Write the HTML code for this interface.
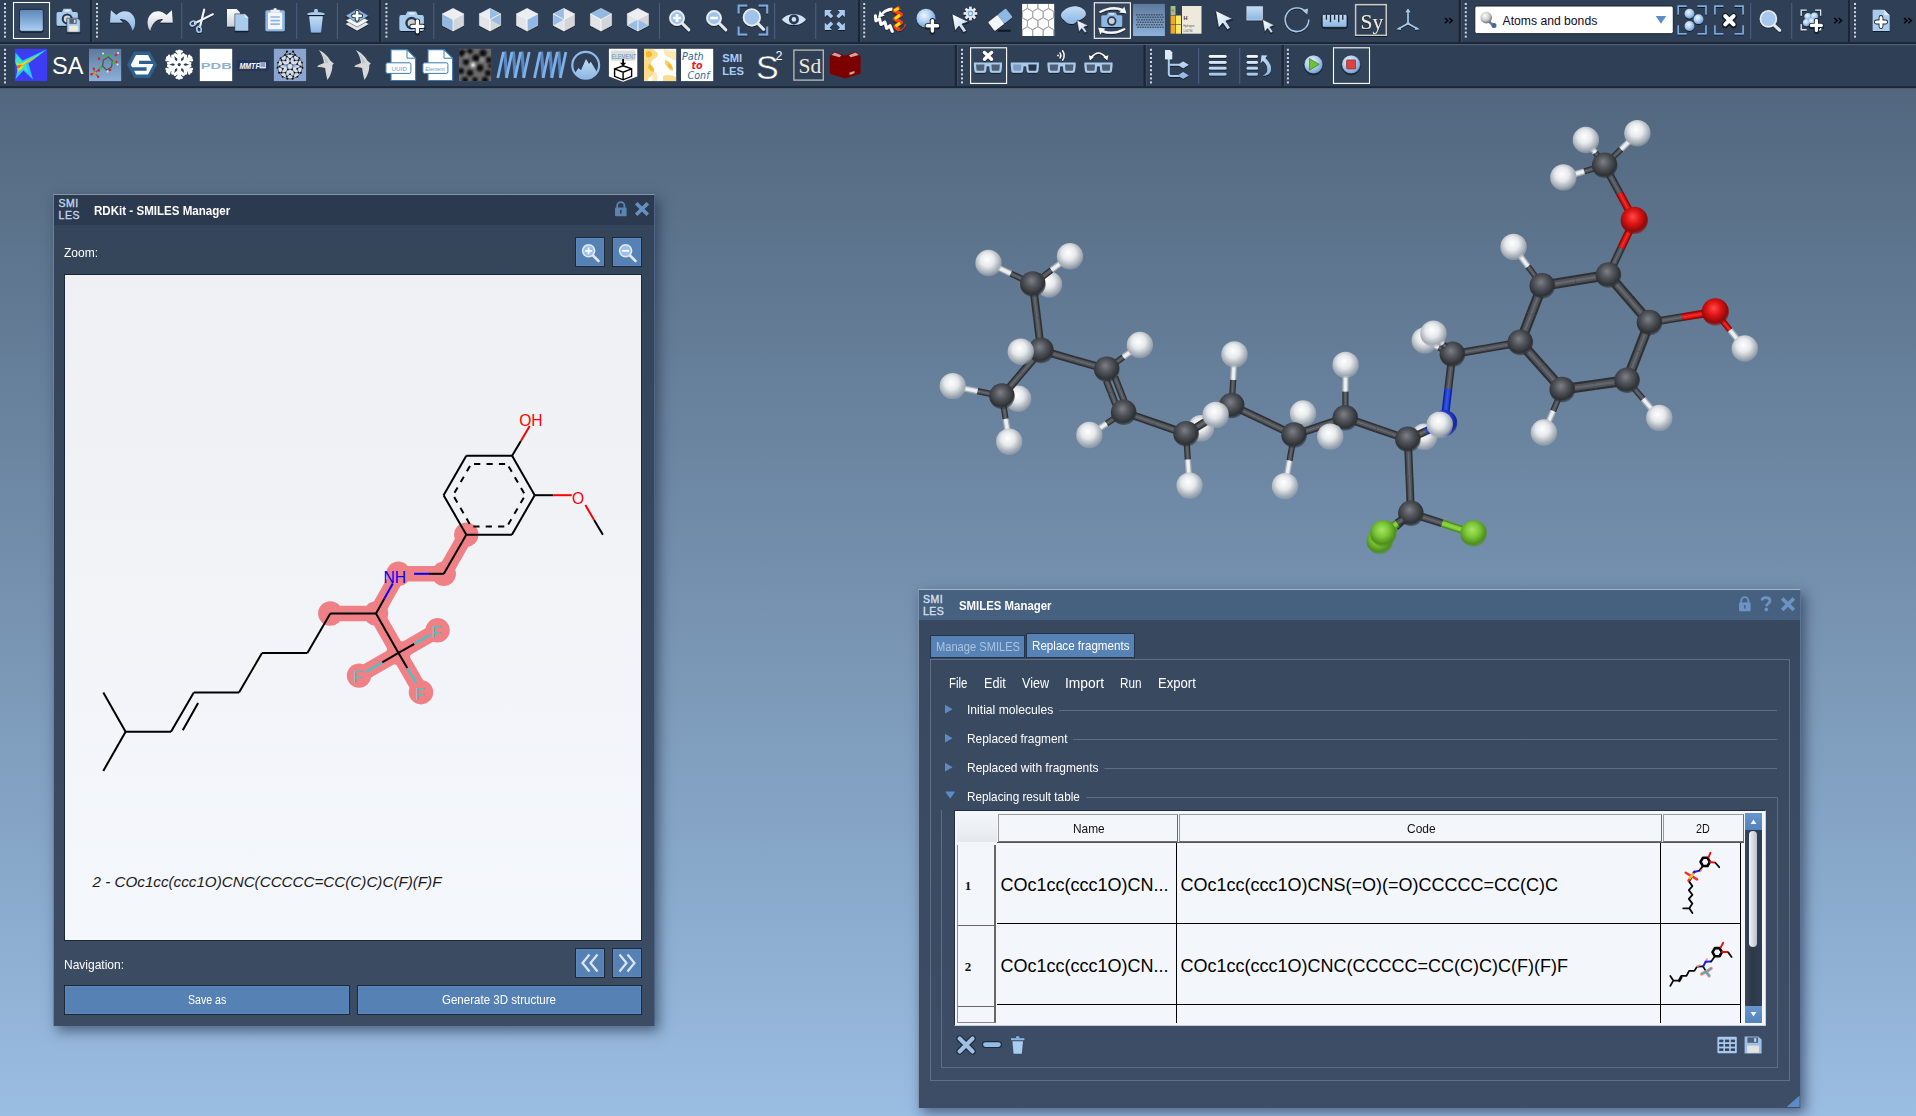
<!DOCTYPE html>
<html><head><meta charset="utf-8"><title>SMILES Manager</title>
<style>
*{box-sizing:border-box}
html,body{margin:0;padding:0}
body{width:1916px;height:1116px;overflow:hidden;position:relative;font-family:"Liberation Sans","DejaVu Sans",sans-serif;font-size:13px;color:#fff;
background:linear-gradient(#52677e 0px,#52677e 86px,#9abde2 1116px)}
.abs{position:absolute}
.ui{display:inline-block;transform:scaleX(.89);transform-origin:0 50%;white-space:nowrap}
.uic{display:inline-block;transform:scaleX(.89);transform-origin:50% 50%;white-space:nowrap}
/* toolbar */
#tb{position:absolute;left:0;top:0;width:1916px;height:88px;background:#2f3f55}
#tb .hl{position:absolute;left:0;width:1916px;height:2px;background:#1f2b3b}
.grip{position:absolute;width:3px;background-image:repeating-linear-gradient(#c9d3df 0 2px,transparent 2px 4px);}
.vsep{position:absolute;width:2px;background:#1f2b3b}
.tsep{position:absolute;width:1px;background:#4a5b78}
.ic{position:absolute;width:32px;height:32px}
/* windows */
.win{position:absolute;box-shadow:4px 5px 12px 0 rgba(28,42,66,.6);}
.win .title{position:absolute;left:0;top:0;right:0;height:30px}
.btn{position:absolute;background:#5581b4;border:1px solid #1d2838;box-shadow:inset 0 0 0 1px rgba(120,160,210,.25)}
</style></head><body>
<style>
.hd{background:#f3f6fb;border:1px solid #9a9a9a;border-right:1.5px solid #6e6e6e;border-bottom:1.5px solid #6e6e6e}
.rh{background:#f3f6fb;border-left:1px solid #8f8f8f;border-right:2px solid #666;border-bottom:1.5px solid #666}
</style>
<svg class="abs" style="left:0;top:0" width="1916" height="1116" viewBox="0 0 1916 1116"><defs>
<radialGradient id="gC" cx="46%" cy="40%" r="58%" fx="44%" fy="36%"><stop offset="0" stop-color="#7d8186"/><stop offset=".45" stop-color="#50545a"/><stop offset=".86" stop-color="#2e3134"/><stop offset="1" stop-color="#2e3134" stop-opacity=".55"/></radialGradient>
<radialGradient id="gH" cx="46%" cy="40%" r="58%" fx="44%" fy="36%"><stop offset="0" stop-color="#ffffff"/><stop offset=".45" stop-color="#e6e9ec"/><stop offset=".86" stop-color="#a2aab3"/><stop offset="1" stop-color="#a2aab3" stop-opacity=".55"/></radialGradient>
<radialGradient id="gO" cx="46%" cy="40%" r="58%" fx="44%" fy="36%"><stop offset="0" stop-color="#ff4a4a"/><stop offset=".45" stop-color="#df1414"/><stop offset=".86" stop-color="#8e0a0a"/><stop offset="1" stop-color="#8e0a0a" stop-opacity=".55"/></radialGradient>
<radialGradient id="gN" cx="46%" cy="40%" r="58%" fx="44%" fy="36%"><stop offset="0" stop-color="#4a6cf5"/><stop offset=".45" stop-color="#2443dc"/><stop offset=".86" stop-color="#13259a"/><stop offset="1" stop-color="#13259a" stop-opacity=".55"/></radialGradient>
<radialGradient id="gF" cx="46%" cy="40%" r="58%" fx="44%" fy="36%"><stop offset="0" stop-color="#a6e567"/><stop offset=".45" stop-color="#7cc837"/><stop offset=".86" stop-color="#4f8f1d"/><stop offset="1" stop-color="#4f8f1d" stop-opacity=".55"/></radialGradient>
</defs>
<circle cx="1379.8" cy="540.9" r="13.2" fill="url(#gF)"/>
<circle cx="1049.0" cy="284.5" r="13.2" fill="url(#gH)"/>
<circle cx="1018.1" cy="398.7" r="13.2" fill="url(#gH)"/>
<circle cx="1200.9" cy="428.3" r="13.2" fill="url(#gH)"/>
<circle cx="1303.0" cy="413.5" r="13.2" fill="url(#gH)"/>
<circle cx="1424.2" cy="436.8" r="13.2" fill="url(#gH)"/>
<circle cx="1424.8" cy="340.4" r="13.2" fill="url(#gH)"/>
<g stroke-linecap="butt"><line x1="1298.0" y1="425.5" x2="1298.5" y2="424.2" stroke="#2e3134" stroke-width="6.2"/><line x1="1298.0" y1="425.5" x2="1298.5" y2="424.2" stroke="#50545a" stroke-width="3.7"/><line x1="1298.0" y1="425.5" x2="1298.5" y2="424.2" stroke="#7d8186" stroke-width="1.2" opacity=".45"/></g><g stroke-linecap="butt"><line x1="1298.5" y1="424.2" x2="1299.0" y2="423.3" stroke="#a2aab3" stroke-width="6.2"/><line x1="1298.5" y1="424.2" x2="1299.0" y2="423.3" stroke="#e6e9ec" stroke-width="3.7"/><line x1="1298.5" y1="424.2" x2="1299.0" y2="423.3" stroke="#ffffff" stroke-width="1.2" opacity=".45"/></g>
<g stroke-linecap="butt"><line x1="1443.3" y1="349.7" x2="1438.6" y2="347.4" stroke="#2e3134" stroke-width="6.2"/><line x1="1443.3" y1="349.7" x2="1438.6" y2="347.4" stroke="#50545a" stroke-width="3.7"/><line x1="1443.3" y1="349.7" x2="1438.6" y2="347.4" stroke="#7d8186" stroke-width="1.2" opacity=".45"/></g><g stroke-linecap="butt"><line x1="1438.6" y1="347.4" x2="1434.2" y2="345.1" stroke="#a2aab3" stroke-width="6.2"/><line x1="1438.6" y1="347.4" x2="1434.2" y2="345.1" stroke="#e6e9ec" stroke-width="3.7"/><line x1="1438.6" y1="347.4" x2="1434.2" y2="345.1" stroke="#ffffff" stroke-width="1.2" opacity=".45"/></g>
<g stroke-linecap="butt"><line x1="1403.2" y1="520.1" x2="1395.3" y2="527.1" stroke="#2e3134" stroke-width="8"/><line x1="1403.2" y1="520.1" x2="1395.3" y2="527.1" stroke="#50545a" stroke-width="4.8"/><line x1="1403.2" y1="520.1" x2="1395.3" y2="527.1" stroke="#7d8186" stroke-width="1.6" opacity=".45"/></g><g stroke-linecap="butt"><line x1="1395.3" y1="527.1" x2="1387.7" y2="533.9" stroke="#4f8f1d" stroke-width="8"/><line x1="1395.3" y1="527.1" x2="1387.7" y2="533.9" stroke="#7cc837" stroke-width="4.8"/><line x1="1395.3" y1="527.1" x2="1387.7" y2="533.9" stroke="#a6e567" stroke-width="1.6" opacity=".45"/></g>
<g stroke-linecap="butt"><line x1="1023.6" y1="279.6" x2="1010.7" y2="273.5" stroke="#2e3134" stroke-width="6.2"/><line x1="1023.6" y1="279.6" x2="1010.7" y2="273.5" stroke="#50545a" stroke-width="3.7"/><line x1="1023.6" y1="279.6" x2="1010.7" y2="273.5" stroke="#7d8186" stroke-width="1.2" opacity=".45"/></g><g stroke-linecap="butt"><line x1="1010.7" y1="273.5" x2="998.0" y2="267.5" stroke="#a2aab3" stroke-width="6.2"/><line x1="1010.7" y1="273.5" x2="998.0" y2="267.5" stroke="#e6e9ec" stroke-width="3.7"/><line x1="1010.7" y1="273.5" x2="998.0" y2="267.5" stroke="#ffffff" stroke-width="1.2" opacity=".45"/></g>
<g stroke-linecap="butt"><line x1="1041.1" y1="277.9" x2="1051.5" y2="270.1" stroke="#2e3134" stroke-width="6.2"/><line x1="1041.1" y1="277.9" x2="1051.5" y2="270.1" stroke="#50545a" stroke-width="3.7"/><line x1="1041.1" y1="277.9" x2="1051.5" y2="270.1" stroke="#7d8186" stroke-width="1.2" opacity=".45"/></g><g stroke-linecap="butt"><line x1="1051.5" y1="270.1" x2="1061.5" y2="262.6" stroke="#a2aab3" stroke-width="6.2"/><line x1="1051.5" y1="270.1" x2="1061.5" y2="262.6" stroke="#e6e9ec" stroke-width="3.7"/><line x1="1051.5" y1="270.1" x2="1061.5" y2="262.6" stroke="#ffffff" stroke-width="1.2" opacity=".45"/></g>
<g stroke-linecap="butt"><line x1="992.0" y1="394.1" x2="977.4" y2="391.1" stroke="#2e3134" stroke-width="6.2"/><line x1="992.0" y1="394.1" x2="977.4" y2="391.1" stroke="#50545a" stroke-width="3.7"/><line x1="992.0" y1="394.1" x2="977.4" y2="391.1" stroke="#7d8186" stroke-width="1.2" opacity=".45"/></g><g stroke-linecap="butt"><line x1="977.4" y1="391.1" x2="963.1" y2="388.2" stroke="#a2aab3" stroke-width="6.2"/><line x1="977.4" y1="391.1" x2="963.1" y2="388.2" stroke="#e6e9ec" stroke-width="3.7"/><line x1="977.4" y1="391.1" x2="963.1" y2="388.2" stroke="#ffffff" stroke-width="1.2" opacity=".45"/></g>
<g stroke-linecap="butt"><line x1="1003.6" y1="406.2" x2="1005.6" y2="418.9" stroke="#2e3134" stroke-width="6.2"/><line x1="1003.6" y1="406.2" x2="1005.6" y2="418.9" stroke="#50545a" stroke-width="3.7"/><line x1="1003.6" y1="406.2" x2="1005.6" y2="418.9" stroke="#7d8186" stroke-width="1.2" opacity=".45"/></g><g stroke-linecap="butt"><line x1="1005.6" y1="418.9" x2="1007.6" y2="431.3" stroke="#a2aab3" stroke-width="6.2"/><line x1="1005.6" y1="418.9" x2="1007.6" y2="431.3" stroke="#e6e9ec" stroke-width="3.7"/><line x1="1005.6" y1="418.9" x2="1007.6" y2="431.3" stroke="#ffffff" stroke-width="1.2" opacity=".45"/></g>
<g stroke-linecap="butt"><line x1="1115.1" y1="363.2" x2="1123.3" y2="357.1" stroke="#2e3134" stroke-width="6.2"/><line x1="1115.1" y1="363.2" x2="1123.3" y2="357.1" stroke="#50545a" stroke-width="3.7"/><line x1="1115.1" y1="363.2" x2="1123.3" y2="357.1" stroke="#7d8186" stroke-width="1.2" opacity=".45"/></g><g stroke-linecap="butt"><line x1="1123.3" y1="357.1" x2="1131.4" y2="351.2" stroke="#a2aab3" stroke-width="6.2"/><line x1="1123.3" y1="357.1" x2="1131.4" y2="351.2" stroke="#e6e9ec" stroke-width="3.7"/><line x1="1123.3" y1="357.1" x2="1131.4" y2="351.2" stroke="#ffffff" stroke-width="1.2" opacity=".45"/></g>
<g stroke-linecap="butt"><line x1="1115.2" y1="417.9" x2="1106.5" y2="423.6" stroke="#2e3134" stroke-width="6.2"/><line x1="1115.2" y1="417.9" x2="1106.5" y2="423.6" stroke="#50545a" stroke-width="3.7"/><line x1="1115.2" y1="417.9" x2="1106.5" y2="423.6" stroke="#7d8186" stroke-width="1.2" opacity=".45"/></g><g stroke-linecap="butt"><line x1="1106.5" y1="423.6" x2="1098.1" y2="429.2" stroke="#a2aab3" stroke-width="6.2"/><line x1="1106.5" y1="423.6" x2="1098.1" y2="429.2" stroke="#e6e9ec" stroke-width="3.7"/><line x1="1106.5" y1="423.6" x2="1098.1" y2="429.2" stroke="#ffffff" stroke-width="1.2" opacity=".45"/></g>
<g stroke-linecap="butt"><line x1="1186.8" y1="443.9" x2="1187.8" y2="459.6" stroke="#2e3134" stroke-width="6.2"/><line x1="1186.8" y1="443.9" x2="1187.8" y2="459.6" stroke="#50545a" stroke-width="3.7"/><line x1="1186.8" y1="443.9" x2="1187.8" y2="459.6" stroke="#7d8186" stroke-width="1.2" opacity=".45"/></g><g stroke-linecap="butt"><line x1="1187.8" y1="459.6" x2="1188.9" y2="475.1" stroke="#a2aab3" stroke-width="6.2"/><line x1="1187.8" y1="459.6" x2="1188.9" y2="475.1" stroke="#e6e9ec" stroke-width="3.7"/><line x1="1187.8" y1="459.6" x2="1188.9" y2="475.1" stroke="#ffffff" stroke-width="1.2" opacity=".45"/></g>
<g stroke-linecap="butt"><line x1="1232.3" y1="395.3" x2="1233.2" y2="379.9" stroke="#2e3134" stroke-width="6.2"/><line x1="1232.3" y1="395.3" x2="1233.2" y2="379.9" stroke="#50545a" stroke-width="3.7"/><line x1="1232.3" y1="395.3" x2="1233.2" y2="379.9" stroke="#7d8186" stroke-width="1.2" opacity=".45"/></g><g stroke-linecap="butt"><line x1="1233.2" y1="379.9" x2="1233.9" y2="364.9" stroke="#a2aab3" stroke-width="6.2"/><line x1="1233.2" y1="379.9" x2="1233.9" y2="364.9" stroke="#e6e9ec" stroke-width="3.7"/><line x1="1233.2" y1="379.9" x2="1233.9" y2="364.9" stroke="#ffffff" stroke-width="1.2" opacity=".45"/></g>
<g stroke-linecap="butt"><line x1="1292.3" y1="445.1" x2="1289.5" y2="460.6" stroke="#2e3134" stroke-width="6.2"/><line x1="1292.3" y1="445.1" x2="1289.5" y2="460.6" stroke="#50545a" stroke-width="3.7"/><line x1="1292.3" y1="445.1" x2="1289.5" y2="460.6" stroke="#7d8186" stroke-width="1.2" opacity=".45"/></g><g stroke-linecap="butt"><line x1="1289.5" y1="460.6" x2="1286.9" y2="475.7" stroke="#a2aab3" stroke-width="6.2"/><line x1="1289.5" y1="460.6" x2="1286.9" y2="475.7" stroke="#e6e9ec" stroke-width="3.7"/><line x1="1289.5" y1="460.6" x2="1286.9" y2="475.7" stroke="#ffffff" stroke-width="1.2" opacity=".45"/></g>
<g stroke-linecap="butt"><line x1="1345.4" y1="407.6" x2="1345.4" y2="391.4" stroke="#2e3134" stroke-width="6.2"/><line x1="1345.4" y1="407.6" x2="1345.4" y2="391.4" stroke="#50545a" stroke-width="3.7"/><line x1="1345.4" y1="407.6" x2="1345.4" y2="391.4" stroke="#7d8186" stroke-width="1.2" opacity=".45"/></g><g stroke-linecap="butt"><line x1="1345.4" y1="391.4" x2="1345.5" y2="375.5" stroke="#a2aab3" stroke-width="6.2"/><line x1="1345.4" y1="391.4" x2="1345.5" y2="375.5" stroke="#e6e9ec" stroke-width="3.7"/><line x1="1345.4" y1="391.4" x2="1345.5" y2="375.5" stroke="#ffffff" stroke-width="1.2" opacity=".45"/></g>
<g stroke-linecap="butt"><line x1="1536.2" y1="277.5" x2="1527.9" y2="266.3" stroke="#2e3134" stroke-width="6.2"/><line x1="1536.2" y1="277.5" x2="1527.9" y2="266.3" stroke="#50545a" stroke-width="3.7"/><line x1="1536.2" y1="277.5" x2="1527.9" y2="266.3" stroke="#7d8186" stroke-width="1.2" opacity=".45"/></g><g stroke-linecap="butt"><line x1="1527.9" y1="266.3" x2="1519.9" y2="255.4" stroke="#a2aab3" stroke-width="6.2"/><line x1="1527.9" y1="266.3" x2="1519.9" y2="255.4" stroke="#e6e9ec" stroke-width="3.7"/><line x1="1527.9" y1="266.3" x2="1519.9" y2="255.4" stroke="#ffffff" stroke-width="1.2" opacity=".45"/></g>
<g stroke-linecap="butt"><line x1="1633.8" y1="388.0" x2="1643.2" y2="399.0" stroke="#2e3134" stroke-width="6.2"/><line x1="1633.8" y1="388.0" x2="1643.2" y2="399.0" stroke="#50545a" stroke-width="3.7"/><line x1="1633.8" y1="388.0" x2="1643.2" y2="399.0" stroke="#7d8186" stroke-width="1.2" opacity=".45"/></g><g stroke-linecap="butt"><line x1="1643.2" y1="399.0" x2="1652.4" y2="409.9" stroke="#a2aab3" stroke-width="6.2"/><line x1="1643.2" y1="399.0" x2="1652.4" y2="409.9" stroke="#e6e9ec" stroke-width="3.7"/><line x1="1643.2" y1="399.0" x2="1652.4" y2="409.9" stroke="#ffffff" stroke-width="1.2" opacity=".45"/></g>
<g stroke-linecap="butt"><line x1="1558.3" y1="398.9" x2="1553.1" y2="411.0" stroke="#2e3134" stroke-width="6.2"/><line x1="1558.3" y1="398.9" x2="1553.1" y2="411.0" stroke="#50545a" stroke-width="3.7"/><line x1="1558.3" y1="398.9" x2="1553.1" y2="411.0" stroke="#7d8186" stroke-width="1.2" opacity=".45"/></g><g stroke-linecap="butt"><line x1="1553.1" y1="411.0" x2="1548.1" y2="422.8" stroke="#a2aab3" stroke-width="6.2"/><line x1="1553.1" y1="411.0" x2="1548.1" y2="422.8" stroke="#e6e9ec" stroke-width="3.7"/><line x1="1553.1" y1="411.0" x2="1548.1" y2="422.8" stroke="#ffffff" stroke-width="1.2" opacity=".45"/></g>
<g stroke-linecap="butt"><line x1="1722.1" y1="320.3" x2="1730.0" y2="330.1" stroke="#8e0a0a" stroke-width="6.2"/><line x1="1722.1" y1="320.3" x2="1730.0" y2="330.1" stroke="#df1414" stroke-width="3.7"/><line x1="1722.1" y1="320.3" x2="1730.0" y2="330.1" stroke="#ff4a4a" stroke-width="1.2" opacity=".45"/></g><g stroke-linecap="butt"><line x1="1730.0" y1="330.1" x2="1738.2" y2="340.3" stroke="#a2aab3" stroke-width="6.2"/><line x1="1730.0" y1="330.1" x2="1738.2" y2="340.3" stroke="#e6e9ec" stroke-width="3.7"/><line x1="1730.0" y1="330.1" x2="1738.2" y2="340.3" stroke="#ffffff" stroke-width="1.2" opacity=".45"/></g>
<g stroke-linecap="butt"><line x1="1598.6" y1="157.1" x2="1595.3" y2="152.7" stroke="#2e3134" stroke-width="6.2"/><line x1="1598.6" y1="157.1" x2="1595.3" y2="152.7" stroke="#50545a" stroke-width="3.7"/><line x1="1598.6" y1="157.1" x2="1595.3" y2="152.7" stroke="#7d8186" stroke-width="1.2" opacity=".45"/></g><g stroke-linecap="butt"><line x1="1595.3" y1="152.7" x2="1592.2" y2="148.5" stroke="#a2aab3" stroke-width="6.2"/><line x1="1595.3" y1="152.7" x2="1592.2" y2="148.5" stroke="#e6e9ec" stroke-width="3.7"/><line x1="1595.3" y1="152.7" x2="1592.2" y2="148.5" stroke="#ffffff" stroke-width="1.2" opacity=".45"/></g>
<g stroke-linecap="butt"><line x1="1612.0" y1="158.1" x2="1621.1" y2="149.2" stroke="#2e3134" stroke-width="6.2"/><line x1="1612.0" y1="158.1" x2="1621.1" y2="149.2" stroke="#50545a" stroke-width="3.7"/><line x1="1612.0" y1="158.1" x2="1621.1" y2="149.2" stroke="#7d8186" stroke-width="1.2" opacity=".45"/></g><g stroke-linecap="butt"><line x1="1621.1" y1="149.2" x2="1629.9" y2="140.6" stroke="#a2aab3" stroke-width="6.2"/><line x1="1621.1" y1="149.2" x2="1629.9" y2="140.6" stroke="#e6e9ec" stroke-width="3.7"/><line x1="1621.1" y1="149.2" x2="1629.9" y2="140.6" stroke="#ffffff" stroke-width="1.2" opacity=".45"/></g>
<g stroke-linecap="butt"><line x1="1594.9" y1="168.2" x2="1584.1" y2="171.4" stroke="#2e3134" stroke-width="6.2"/><line x1="1594.9" y1="168.2" x2="1584.1" y2="171.4" stroke="#50545a" stroke-width="3.7"/><line x1="1594.9" y1="168.2" x2="1584.1" y2="171.4" stroke="#7d8186" stroke-width="1.2" opacity=".45"/></g><g stroke-linecap="butt"><line x1="1584.1" y1="171.4" x2="1573.5" y2="174.4" stroke="#a2aab3" stroke-width="6.2"/><line x1="1584.1" y1="171.4" x2="1573.5" y2="174.4" stroke="#e6e9ec" stroke-width="3.7"/><line x1="1584.1" y1="171.4" x2="1573.5" y2="174.4" stroke="#ffffff" stroke-width="1.2" opacity=".45"/></g>
<g stroke-linecap="butt"><line x1="1034.1" y1="294.2" x2="1037.0" y2="317.2" stroke="#2e3134" stroke-width="8"/><line x1="1034.1" y1="294.2" x2="1037.0" y2="317.2" stroke="#50545a" stroke-width="4.8"/><line x1="1034.1" y1="294.2" x2="1037.0" y2="317.2" stroke="#7d8186" stroke-width="1.6" opacity=".45"/></g><g stroke-linecap="butt"><line x1="1037.0" y1="317.2" x2="1039.8" y2="340.2" stroke="#2e3134" stroke-width="8"/><line x1="1037.0" y1="317.2" x2="1039.8" y2="340.2" stroke="#50545a" stroke-width="4.8"/><line x1="1037.0" y1="317.2" x2="1039.8" y2="340.2" stroke="#7d8186" stroke-width="1.6" opacity=".45"/></g>
<g stroke-linecap="butt"><line x1="1034.4" y1="358.2" x2="1021.5" y2="373.2" stroke="#2e3134" stroke-width="8"/><line x1="1034.4" y1="358.2" x2="1021.5" y2="373.2" stroke="#50545a" stroke-width="4.8"/><line x1="1034.4" y1="358.2" x2="1021.5" y2="373.2" stroke="#7d8186" stroke-width="1.6" opacity=".45"/></g><g stroke-linecap="butt"><line x1="1021.5" y1="373.2" x2="1008.6" y2="388.3" stroke="#2e3134" stroke-width="8"/><line x1="1021.5" y1="373.2" x2="1008.6" y2="388.3" stroke="#50545a" stroke-width="4.8"/><line x1="1021.5" y1="373.2" x2="1008.6" y2="388.3" stroke="#7d8186" stroke-width="1.6" opacity=".45"/></g>
<g stroke-linecap="butt"><line x1="1050.8" y1="353.2" x2="1073.9" y2="359.8" stroke="#2e3134" stroke-width="8"/><line x1="1050.8" y1="353.2" x2="1073.9" y2="359.8" stroke="#50545a" stroke-width="4.8"/><line x1="1050.8" y1="353.2" x2="1073.9" y2="359.8" stroke="#7d8186" stroke-width="1.6" opacity=".45"/></g><g stroke-linecap="butt"><line x1="1073.9" y1="359.8" x2="1097.0" y2="366.4" stroke="#2e3134" stroke-width="8"/><line x1="1073.9" y1="359.8" x2="1097.0" y2="366.4" stroke="#50545a" stroke-width="4.8"/><line x1="1073.9" y1="359.8" x2="1097.0" y2="366.4" stroke="#7d8186" stroke-width="1.6" opacity=".45"/></g>
<g stroke-linecap="butt"><line x1="1133.4" y1="415.5" x2="1154.9" y2="422.9" stroke="#2e3134" stroke-width="8"/><line x1="1133.4" y1="415.5" x2="1154.9" y2="422.9" stroke="#50545a" stroke-width="4.8"/><line x1="1133.4" y1="415.5" x2="1154.9" y2="422.9" stroke="#7d8186" stroke-width="1.6" opacity=".45"/></g><g stroke-linecap="butt"><line x1="1154.9" y1="422.9" x2="1176.4" y2="430.4" stroke="#2e3134" stroke-width="8"/><line x1="1154.9" y1="422.9" x2="1176.4" y2="430.4" stroke="#50545a" stroke-width="4.8"/><line x1="1154.9" y1="422.9" x2="1176.4" y2="430.4" stroke="#7d8186" stroke-width="1.6" opacity=".45"/></g>
<g stroke-linecap="butt"><line x1="1194.8" y1="428.3" x2="1208.9" y2="419.6" stroke="#2e3134" stroke-width="8"/><line x1="1194.8" y1="428.3" x2="1208.9" y2="419.6" stroke="#50545a" stroke-width="4.8"/><line x1="1194.8" y1="428.3" x2="1208.9" y2="419.6" stroke="#7d8186" stroke-width="1.6" opacity=".45"/></g><g stroke-linecap="butt"><line x1="1208.9" y1="419.6" x2="1223.1" y2="410.9" stroke="#2e3134" stroke-width="8"/><line x1="1208.9" y1="419.6" x2="1223.1" y2="410.9" stroke="#50545a" stroke-width="4.8"/><line x1="1208.9" y1="419.6" x2="1223.1" y2="410.9" stroke="#7d8186" stroke-width="1.6" opacity=".45"/></g>
<g stroke-linecap="butt"><line x1="1241.1" y1="409.9" x2="1262.9" y2="420.2" stroke="#2e3134" stroke-width="8"/><line x1="1241.1" y1="409.9" x2="1262.9" y2="420.2" stroke="#50545a" stroke-width="4.8"/><line x1="1241.1" y1="409.9" x2="1262.9" y2="420.2" stroke="#7d8186" stroke-width="1.6" opacity=".45"/></g><g stroke-linecap="butt"><line x1="1262.9" y1="420.2" x2="1284.8" y2="430.6" stroke="#2e3134" stroke-width="8"/><line x1="1262.9" y1="420.2" x2="1284.8" y2="430.6" stroke="#50545a" stroke-width="4.8"/><line x1="1262.9" y1="420.2" x2="1284.8" y2="430.6" stroke="#7d8186" stroke-width="1.6" opacity=".45"/></g>
<g stroke-linecap="butt"><line x1="1303.8" y1="431.7" x2="1319.7" y2="426.4" stroke="#2e3134" stroke-width="8"/><line x1="1303.8" y1="431.7" x2="1319.7" y2="426.4" stroke="#50545a" stroke-width="4.8"/><line x1="1303.8" y1="431.7" x2="1319.7" y2="426.4" stroke="#7d8186" stroke-width="1.6" opacity=".45"/></g><g stroke-linecap="butt"><line x1="1319.7" y1="426.4" x2="1335.6" y2="421.1" stroke="#2e3134" stroke-width="8"/><line x1="1319.7" y1="426.4" x2="1335.6" y2="421.1" stroke="#50545a" stroke-width="4.8"/><line x1="1319.7" y1="426.4" x2="1335.6" y2="421.1" stroke="#7d8186" stroke-width="1.6" opacity=".45"/></g>
<g stroke-linecap="butt"><line x1="1355.0" y1="421.1" x2="1376.6" y2="428.6" stroke="#2e3134" stroke-width="8"/><line x1="1355.0" y1="421.1" x2="1376.6" y2="428.6" stroke="#50545a" stroke-width="4.8"/><line x1="1355.0" y1="421.1" x2="1376.6" y2="428.6" stroke="#7d8186" stroke-width="1.6" opacity=".45"/></g><g stroke-linecap="butt"><line x1="1376.6" y1="428.6" x2="1398.2" y2="436.0" stroke="#2e3134" stroke-width="8"/><line x1="1376.6" y1="428.6" x2="1398.2" y2="436.0" stroke="#50545a" stroke-width="4.8"/><line x1="1376.6" y1="428.6" x2="1398.2" y2="436.0" stroke="#7d8186" stroke-width="1.6" opacity=".45"/></g>
<g stroke-linecap="butt"><line x1="1417.2" y1="435.1" x2="1426.1" y2="431.1" stroke="#2e3134" stroke-width="8"/><line x1="1417.2" y1="435.1" x2="1426.1" y2="431.1" stroke="#50545a" stroke-width="4.8"/><line x1="1417.2" y1="435.1" x2="1426.1" y2="431.1" stroke="#7d8186" stroke-width="1.6" opacity=".45"/></g><g stroke-linecap="butt"><line x1="1426.1" y1="431.1" x2="1434.8" y2="427.3" stroke="#13259a" stroke-width="8"/><line x1="1426.1" y1="431.1" x2="1434.8" y2="427.3" stroke="#2443dc" stroke-width="4.8"/><line x1="1426.1" y1="431.1" x2="1434.8" y2="427.3" stroke="#4a6cf5" stroke-width="1.6" opacity=".45"/></g>
<g stroke-linecap="butt"><line x1="1445.5" y1="412.7" x2="1448.3" y2="388.6" stroke="#13259a" stroke-width="8"/><line x1="1445.5" y1="412.7" x2="1448.3" y2="388.6" stroke="#2443dc" stroke-width="4.8"/><line x1="1445.5" y1="412.7" x2="1448.3" y2="388.6" stroke="#4a6cf5" stroke-width="1.6" opacity=".45"/></g><g stroke-linecap="butt"><line x1="1448.3" y1="388.6" x2="1451.2" y2="364.5" stroke="#2e3134" stroke-width="8"/><line x1="1448.3" y1="388.6" x2="1451.2" y2="364.5" stroke="#50545a" stroke-width="4.8"/><line x1="1448.3" y1="388.6" x2="1451.2" y2="364.5" stroke="#7d8186" stroke-width="1.6" opacity=".45"/></g>
<g stroke-linecap="butt"><line x1="1462.5" y1="352.5" x2="1486.3" y2="348.4" stroke="#2e3134" stroke-width="8"/><line x1="1462.5" y1="352.5" x2="1486.3" y2="348.4" stroke="#50545a" stroke-width="4.8"/><line x1="1462.5" y1="352.5" x2="1486.3" y2="348.4" stroke="#7d8186" stroke-width="1.6" opacity=".45"/></g><g stroke-linecap="butt"><line x1="1486.3" y1="348.4" x2="1510.2" y2="344.2" stroke="#2e3134" stroke-width="8"/><line x1="1486.3" y1="348.4" x2="1510.2" y2="344.2" stroke="#50545a" stroke-width="4.8"/><line x1="1486.3" y1="348.4" x2="1510.2" y2="344.2" stroke="#7d8186" stroke-width="1.6" opacity=".45"/></g>
<g stroke-linecap="butt"><line x1="1612.8" y1="265.7" x2="1621.3" y2="247.7" stroke="#2e3134" stroke-width="8"/><line x1="1612.8" y1="265.7" x2="1621.3" y2="247.7" stroke="#50545a" stroke-width="4.8"/><line x1="1612.8" y1="265.7" x2="1621.3" y2="247.7" stroke="#7d8186" stroke-width="1.6" opacity=".45"/></g><g stroke-linecap="butt"><line x1="1621.3" y1="247.7" x2="1629.6" y2="230.2" stroke="#8e0a0a" stroke-width="8"/><line x1="1621.3" y1="247.7" x2="1629.6" y2="230.2" stroke="#df1414" stroke-width="4.8"/><line x1="1621.3" y1="247.7" x2="1629.6" y2="230.2" stroke="#ff4a4a" stroke-width="1.6" opacity=".45"/></g>
<g stroke-linecap="butt"><line x1="1629.2" y1="210.8" x2="1619.5" y2="192.9" stroke="#8e0a0a" stroke-width="8"/><line x1="1629.2" y1="210.8" x2="1619.5" y2="192.9" stroke="#df1414" stroke-width="4.8"/><line x1="1629.2" y1="210.8" x2="1619.5" y2="192.9" stroke="#ff4a4a" stroke-width="1.6" opacity=".45"/></g><g stroke-linecap="butt"><line x1="1619.5" y1="192.9" x2="1609.5" y2="174.3" stroke="#2e3134" stroke-width="8"/><line x1="1619.5" y1="192.9" x2="1609.5" y2="174.3" stroke="#50545a" stroke-width="4.8"/><line x1="1619.5" y1="192.9" x2="1609.5" y2="174.3" stroke="#7d8186" stroke-width="1.6" opacity=".45"/></g>
<g stroke-linecap="butt"><line x1="1659.6" y1="320.9" x2="1682.4" y2="317.1" stroke="#2e3134" stroke-width="8"/><line x1="1659.6" y1="320.9" x2="1682.4" y2="317.1" stroke="#50545a" stroke-width="4.8"/><line x1="1659.6" y1="320.9" x2="1682.4" y2="317.1" stroke="#7d8186" stroke-width="1.6" opacity=".45"/></g><g stroke-linecap="butt"><line x1="1682.4" y1="317.1" x2="1704.6" y2="313.5" stroke="#8e0a0a" stroke-width="8"/><line x1="1682.4" y1="317.1" x2="1704.6" y2="313.5" stroke="#df1414" stroke-width="4.8"/><line x1="1682.4" y1="317.1" x2="1704.6" y2="313.5" stroke="#ff4a4a" stroke-width="1.6" opacity=".45"/></g>
<g stroke-linecap="butt"><line x1="1408.3" y1="449.5" x2="1409.4" y2="476.3" stroke="#2e3134" stroke-width="8"/><line x1="1408.3" y1="449.5" x2="1409.4" y2="476.3" stroke="#50545a" stroke-width="4.8"/><line x1="1408.3" y1="449.5" x2="1409.4" y2="476.3" stroke="#7d8186" stroke-width="1.6" opacity=".45"/></g><g stroke-linecap="butt"><line x1="1409.4" y1="476.3" x2="1410.5" y2="503.1" stroke="#2e3134" stroke-width="8"/><line x1="1409.4" y1="476.3" x2="1410.5" y2="503.1" stroke="#50545a" stroke-width="4.8"/><line x1="1409.4" y1="476.3" x2="1410.5" y2="503.1" stroke="#7d8186" stroke-width="1.6" opacity=".45"/></g>
<g stroke-linecap="butt"><line x1="1420.7" y1="516.4" x2="1442.2" y2="523.3" stroke="#2e3134" stroke-width="8"/><line x1="1420.7" y1="516.4" x2="1442.2" y2="523.3" stroke="#50545a" stroke-width="4.8"/><line x1="1420.7" y1="516.4" x2="1442.2" y2="523.3" stroke="#7d8186" stroke-width="1.6" opacity=".45"/></g><g stroke-linecap="butt"><line x1="1442.2" y1="523.3" x2="1463.5" y2="530.2" stroke="#4f8f1d" stroke-width="8"/><line x1="1442.2" y1="523.3" x2="1463.5" y2="530.2" stroke="#7cc837" stroke-width="4.8"/><line x1="1442.2" y1="523.3" x2="1463.5" y2="530.2" stroke="#a6e567" stroke-width="1.6" opacity=".45"/></g>
<g stroke-linecap="butt"><line x1="1524.0" y1="332.9" x2="1531.3" y2="314.0" stroke="#2e3134" stroke-width="10.5"/><line x1="1524.0" y1="332.9" x2="1531.3" y2="314.0" stroke="#50545a" stroke-width="6.3"/><line x1="1524.0" y1="332.9" x2="1531.3" y2="314.0" stroke="#7d8186" stroke-width="2.1" opacity=".45"/></g><g stroke-linecap="butt"><line x1="1531.3" y1="314.0" x2="1538.6" y2="295.2" stroke="#2e3134" stroke-width="10.5"/><line x1="1531.3" y1="314.0" x2="1538.6" y2="295.2" stroke="#50545a" stroke-width="6.3"/><line x1="1531.3" y1="314.0" x2="1538.6" y2="295.2" stroke="#7d8186" stroke-width="2.1" opacity=".45"/></g>
<g stroke-linecap="butt"><line x1="1552.4" y1="284.1" x2="1575.3" y2="280.4" stroke="#2e3134" stroke-width="10.5"/><line x1="1552.4" y1="284.1" x2="1575.3" y2="280.4" stroke="#50545a" stroke-width="6.3"/><line x1="1552.4" y1="284.1" x2="1575.3" y2="280.4" stroke="#7d8186" stroke-width="2.1" opacity=".45"/></g><g stroke-linecap="butt"><line x1="1575.3" y1="280.4" x2="1598.3" y2="276.6" stroke="#2e3134" stroke-width="10.5"/><line x1="1575.3" y1="280.4" x2="1598.3" y2="276.6" stroke="#50545a" stroke-width="6.3"/><line x1="1575.3" y1="280.4" x2="1598.3" y2="276.6" stroke="#7d8186" stroke-width="2.1" opacity=".45"/></g>
<g stroke-linecap="butt"><line x1="1615.1" y1="282.7" x2="1629.0" y2="298.8" stroke="#2e3134" stroke-width="10.5"/><line x1="1615.1" y1="282.7" x2="1629.0" y2="298.8" stroke="#50545a" stroke-width="6.3"/><line x1="1615.1" y1="282.7" x2="1629.0" y2="298.8" stroke="#7d8186" stroke-width="2.1" opacity=".45"/></g><g stroke-linecap="butt"><line x1="1629.0" y1="298.8" x2="1642.8" y2="314.8" stroke="#2e3134" stroke-width="10.5"/><line x1="1629.0" y1="298.8" x2="1642.8" y2="314.8" stroke="#50545a" stroke-width="6.3"/><line x1="1629.0" y1="298.8" x2="1642.8" y2="314.8" stroke="#7d8186" stroke-width="2.1" opacity=".45"/></g>
<g stroke-linecap="butt"><line x1="1645.8" y1="332.0" x2="1638.3" y2="351.4" stroke="#2e3134" stroke-width="10.5"/><line x1="1645.8" y1="332.0" x2="1638.3" y2="351.4" stroke="#50545a" stroke-width="6.3"/><line x1="1645.8" y1="332.0" x2="1638.3" y2="351.4" stroke="#7d8186" stroke-width="2.1" opacity=".45"/></g><g stroke-linecap="butt"><line x1="1638.3" y1="351.4" x2="1630.8" y2="370.7" stroke="#2e3134" stroke-width="10.5"/><line x1="1638.3" y1="351.4" x2="1630.8" y2="370.7" stroke="#50545a" stroke-width="6.3"/><line x1="1638.3" y1="351.4" x2="1630.8" y2="370.7" stroke="#7d8186" stroke-width="2.1" opacity=".45"/></g>
<g stroke-linecap="butt"><line x1="1617.0" y1="381.7" x2="1594.7" y2="384.9" stroke="#2e3134" stroke-width="10.5"/><line x1="1617.0" y1="381.7" x2="1594.7" y2="384.9" stroke="#50545a" stroke-width="6.3"/><line x1="1617.0" y1="381.7" x2="1594.7" y2="384.9" stroke="#7d8186" stroke-width="2.1" opacity=".45"/></g><g stroke-linecap="butt"><line x1="1594.7" y1="384.9" x2="1572.4" y2="388.0" stroke="#2e3134" stroke-width="10.5"/><line x1="1594.7" y1="384.9" x2="1572.4" y2="388.0" stroke="#50545a" stroke-width="6.3"/><line x1="1594.7" y1="384.9" x2="1572.4" y2="388.0" stroke="#7d8186" stroke-width="2.1" opacity=".45"/></g>
<g stroke-linecap="butt"><line x1="1555.5" y1="381.9" x2="1541.3" y2="365.9" stroke="#2e3134" stroke-width="10.5"/><line x1="1555.5" y1="381.9" x2="1541.3" y2="365.9" stroke="#50545a" stroke-width="6.3"/><line x1="1555.5" y1="381.9" x2="1541.3" y2="365.9" stroke="#7d8186" stroke-width="2.1" opacity=".45"/></g><g stroke-linecap="butt"><line x1="1541.3" y1="365.9" x2="1527.1" y2="350.0" stroke="#2e3134" stroke-width="10.5"/><line x1="1541.3" y1="365.9" x2="1527.1" y2="350.0" stroke="#50545a" stroke-width="6.3"/><line x1="1541.3" y1="365.9" x2="1527.1" y2="350.0" stroke="#7d8186" stroke-width="2.1" opacity=".45"/></g>
<g stroke-linecap="butt"><line x1="1114.8" y1="377.0" x2="1119.5" y2="389.0" stroke="#2e3134" stroke-width="7"/><line x1="1114.8" y1="377.0" x2="1119.5" y2="389.0" stroke="#50545a" stroke-width="4.2"/><line x1="1114.8" y1="377.0" x2="1119.5" y2="389.0" stroke="#7d8186" stroke-width="1.4" opacity=".45"/></g><g stroke-linecap="butt"><line x1="1119.5" y1="389.0" x2="1124.2" y2="401.0" stroke="#2e3134" stroke-width="7"/><line x1="1119.5" y1="389.0" x2="1124.2" y2="401.0" stroke="#50545a" stroke-width="4.2"/><line x1="1119.5" y1="389.0" x2="1124.2" y2="401.0" stroke="#7d8186" stroke-width="1.4" opacity=".45"/></g>
<g stroke-linecap="butt"><line x1="1106.3" y1="380.4" x2="1111.0" y2="392.4" stroke="#2e3134" stroke-width="7"/><line x1="1106.3" y1="380.4" x2="1111.0" y2="392.4" stroke="#50545a" stroke-width="4.2"/><line x1="1106.3" y1="380.4" x2="1111.0" y2="392.4" stroke="#7d8186" stroke-width="1.4" opacity=".45"/></g><g stroke-linecap="butt"><line x1="1111.0" y1="392.4" x2="1115.7" y2="404.4" stroke="#2e3134" stroke-width="7"/><line x1="1111.0" y1="392.4" x2="1115.7" y2="404.4" stroke="#50545a" stroke-width="4.2"/><line x1="1111.0" y1="392.4" x2="1115.7" y2="404.4" stroke="#7d8186" stroke-width="1.4" opacity=".45"/></g>
<circle cx="1032.9" cy="284.0" r="12.8" fill="url(#gC)"/>
<circle cx="1041.0" cy="350.4" r="12.8" fill="url(#gC)"/>
<circle cx="1002.0" cy="396.1" r="12.8" fill="url(#gC)"/>
<circle cx="1106.8" cy="369.2" r="12.8" fill="url(#gC)"/>
<circle cx="1123.7" cy="412.2" r="12.8" fill="url(#gC)"/>
<circle cx="1186.1" cy="433.7" r="12.8" fill="url(#gC)"/>
<circle cx="1231.8" cy="405.5" r="12.8" fill="url(#gC)"/>
<circle cx="1294.1" cy="435.0" r="12.8" fill="url(#gC)"/>
<circle cx="1345.3" cy="417.8" r="12.8" fill="url(#gC)"/>
<circle cx="1407.9" cy="439.3" r="12.8" fill="url(#gC)"/>
<circle cx="1444.3" cy="423.0" r="13" fill="url(#gN)"/>
<circle cx="1452.4" cy="354.3" r="12.8" fill="url(#gC)"/>
<circle cx="1520.3" cy="342.4" r="12.8" fill="url(#gC)"/>
<circle cx="1542.3" cy="285.7" r="12.8" fill="url(#gC)"/>
<circle cx="1608.4" cy="275.0" r="12.8" fill="url(#gC)"/>
<circle cx="1649.5" cy="322.5" r="12.8" fill="url(#gC)"/>
<circle cx="1627.1" cy="380.2" r="12.8" fill="url(#gC)"/>
<circle cx="1562.3" cy="389.5" r="12.8" fill="url(#gC)"/>
<circle cx="1634.3" cy="220.4" r="13.6" fill="url(#gO)"/>
<circle cx="1604.7" cy="165.3" r="12.8" fill="url(#gC)"/>
<circle cx="1715.3" cy="311.8" r="13.6" fill="url(#gO)"/>
<circle cx="1410.9" cy="513.3" r="12.8" fill="url(#gC)"/>
<circle cx="1473.6" cy="533.4" r="13.2" fill="url(#gF)"/>
<circle cx="988.5" cy="263.0" r="13.2" fill="url(#gH)"/>
<circle cx="1070.0" cy="256.3" r="13.2" fill="url(#gH)"/>
<circle cx="952.8" cy="386.1" r="13.2" fill="url(#gH)"/>
<circle cx="1009.2" cy="441.7" r="13.2" fill="url(#gH)"/>
<circle cx="1139.9" cy="345.0" r="13.2" fill="url(#gH)"/>
<circle cx="1089.3" cy="435.0" r="13.2" fill="url(#gH)"/>
<circle cx="1189.6" cy="485.6" r="13.2" fill="url(#gH)"/>
<circle cx="1234.5" cy="354.4" r="13.2" fill="url(#gH)"/>
<circle cx="1285.0" cy="486.1" r="13.2" fill="url(#gH)"/>
<circle cx="1345.6" cy="364.9" r="13.2" fill="url(#gH)"/>
<circle cx="1513.6" cy="246.9" r="13.2" fill="url(#gH)"/>
<circle cx="1659.3" cy="417.9" r="13.2" fill="url(#gH)"/>
<circle cx="1543.9" cy="432.5" r="13.2" fill="url(#gH)"/>
<circle cx="1744.8" cy="348.5" r="13.2" fill="url(#gH)"/>
<circle cx="1585.9" cy="140.0" r="13.2" fill="url(#gH)"/>
<circle cx="1637.4" cy="133.2" r="13.2" fill="url(#gH)"/>
<circle cx="1563.4" cy="177.4" r="13.2" fill="url(#gH)"/>
<g stroke-linecap="butt"><line x1="1402.6" y1="519.3" x2="1397.1" y2="523.3" stroke="#2e3134" stroke-width="8"/><line x1="1402.6" y1="519.3" x2="1397.1" y2="523.3" stroke="#50545a" stroke-width="4.8"/><line x1="1402.6" y1="519.3" x2="1397.1" y2="523.3" stroke="#7d8186" stroke-width="1.6" opacity=".45"/></g><g stroke-linecap="butt"><line x1="1397.1" y1="523.3" x2="1391.8" y2="527.2" stroke="#4f8f1d" stroke-width="8"/><line x1="1397.1" y1="523.3" x2="1391.8" y2="527.2" stroke="#7cc837" stroke-width="4.8"/><line x1="1397.1" y1="523.3" x2="1391.8" y2="527.2" stroke="#a6e567" stroke-width="1.6" opacity=".45"/></g>
<g stroke-linecap="butt"><line x1="1338.9" y1="425.8" x2="1337.8" y2="427.2" stroke="#2e3134" stroke-width="6.2"/><line x1="1338.9" y1="425.8" x2="1337.8" y2="427.2" stroke="#50545a" stroke-width="3.7"/><line x1="1338.9" y1="425.8" x2="1337.8" y2="427.2" stroke="#7d8186" stroke-width="1.2" opacity=".45"/></g><g stroke-linecap="butt"><line x1="1337.8" y1="427.2" x2="1336.8" y2="428.4" stroke="#a2aab3" stroke-width="6.2"/><line x1="1337.8" y1="427.2" x2="1336.8" y2="428.4" stroke="#e6e9ec" stroke-width="3.7"/><line x1="1337.8" y1="427.2" x2="1336.8" y2="428.4" stroke="#ffffff" stroke-width="1.2" opacity=".45"/></g>
<g stroke-linecap="butt"><line x1="1445.5" y1="346.8" x2="1443.0" y2="344.0" stroke="#2e3134" stroke-width="6.2"/><line x1="1445.5" y1="346.8" x2="1443.0" y2="344.0" stroke="#50545a" stroke-width="3.7"/><line x1="1445.5" y1="346.8" x2="1443.0" y2="344.0" stroke="#7d8186" stroke-width="1.2" opacity=".45"/></g><g stroke-linecap="butt"><line x1="1443.0" y1="344.0" x2="1440.6" y2="341.5" stroke="#a2aab3" stroke-width="6.2"/><line x1="1443.0" y1="344.0" x2="1440.6" y2="341.5" stroke="#e6e9ec" stroke-width="3.7"/><line x1="1443.0" y1="344.0" x2="1440.6" y2="341.5" stroke="#ffffff" stroke-width="1.2" opacity=".45"/></g>
<circle cx="1383.3" cy="533.4" r="13.2" fill="url(#gF)"/>
<circle cx="1020.8" cy="351.7" r="13.2" fill="url(#gH)"/>
<circle cx="1215.7" cy="414.9" r="13.2" fill="url(#gH)"/>
<circle cx="1330.2" cy="436.6" r="13.2" fill="url(#gH)"/>
<circle cx="1439.8" cy="424.7" r="13.2" fill="url(#gH)"/>
<circle cx="1433.5" cy="333.7" r="13.2" fill="url(#gH)"/>
</svg><div id="tb"></div>
<svg class="abs" style="left:0;top:0" width="1916" height="90" viewBox="0 0 1916 90" font-family="Liberation Sans, sans-serif">
<defs>
<linearGradient id="lgb" x1="0" y1="0" x2="0" y2="1"><stop offset="0" stop-color="#5b86b6"/><stop offset="1" stop-color="#abd0f4"/></linearGradient>
<linearGradient id="lgl" x1="0" y1="0" x2="0" y2="1"><stop offset="0" stop-color="#c4dcf5"/><stop offset="1" stop-color="#8bb6e3"/></linearGradient>
<linearGradient id="lgw" x1="0" y1="0" x2="0" y2="1"><stop offset="0" stop-color="#ffffff"/><stop offset="1" stop-color="#c9ced6"/></linearGradient>
<linearGradient id="lgm" x1="0" y1="0" x2="0" y2="1"><stop offset="0" stop-color="#5d7a9c"/><stop offset="1" stop-color="#8db1da"/></linearGradient>
<radialGradient id="rgs" cx="40%" cy="35%" r="65%"><stop offset="0" stop-color="#eef5fc"/><stop offset=".6" stop-color="#a9cbee"/><stop offset="1" stop-color="#6f9fd3"/></radialGradient>
<radialGradient id="rgg" cx="40%" cy="35%" r="65%"><stop offset="0" stop-color="#ffffff"/><stop offset=".6" stop-color="#c9c9c9"/><stop offset="1" stop-color="#777"/></radialGradient>
<filter id="ds" x="-5%" y="-20%" width="110%" height="150%"><feDropShadow dx="0" dy="1" stdDeviation=".7" flood-color="#0c121c" flood-opacity=".9"/></filter>
</defs>
<rect x="0" y="42" width="1916" height="2.2" fill="#1c2635"/><rect x="0" y="44.2" width="1916" height="1" fill="#56687f"/>
<rect x="0" y="86.2" width="1916" height="2" fill="#1c2635"/>
<rect x="90.0" y="0" width="2.4" height="42" fill="#1c2635"/><rect x="92.4" y="0" width="1" height="42" fill="#3d4e66"/>
<rect x="379.0" y="0" width="2.4" height="42" fill="#1c2635"/><rect x="381.4" y="0" width="1" height="42" fill="#3d4e66"/>
<rect x="858.0" y="0" width="2.4" height="42" fill="#1c2635"/><rect x="860.4" y="0" width="1" height="42" fill="#3d4e66"/>
<rect x="1458.6" y="0" width="2.4" height="42" fill="#1c2635"/><rect x="1461.0" y="0" width="1" height="42" fill="#3d4e66"/>
<rect x="1848.0" y="0" width="2.4" height="42" fill="#1c2635"/><rect x="1850.4" y="0" width="1" height="42" fill="#3d4e66"/>
<rect x="954.7" y="45" width="2.4" height="41" fill="#1c2635"/><rect x="957.1" y="45" width="1" height="41" fill="#3d4e66"/>
<rect x="1143.5" y="45" width="2.4" height="41" fill="#1c2635"/><rect x="1145.9" y="45" width="1" height="41" fill="#3d4e66"/>
<rect x="1281.5" y="45" width="2.4" height="41" fill="#1c2635"/><rect x="1283.9" y="45" width="1" height="41" fill="#3d4e66"/>
<rect x="181.1" y="3" width="1.2" height="36" fill="#4b5a7e"/>
<rect x="296.1" y="3" width="1.2" height="36" fill="#4b5a7e"/>
<rect x="336.8" y="3" width="1.2" height="36" fill="#4b5a7e"/>
<rect x="433.1" y="3" width="1.2" height="36" fill="#4b5a7e"/>
<rect x="658.9" y="3" width="1.2" height="36" fill="#4b5a7e"/>
<rect x="774.0" y="3" width="1.2" height="36" fill="#4b5a7e"/>
<rect x="815.1" y="3" width="1.2" height="36" fill="#4b5a7e"/>
<rect x="1750.1" y="3" width="1.2" height="36" fill="#4b5a7e"/>
<rect x="1791.1" y="3" width="1.2" height="36" fill="#4b5a7e"/>
<rect x="1198.0" y="48" width="1.2" height="36" fill="#4b5a7e"/>
<rect x="1239.1" y="48" width="1.2" height="36" fill="#4b5a7e"/>
<rect x="4.0" y="3.0" width="2" height="2" fill="#d0d8e4"/>
<rect x="4.0" y="7.1" width="2" height="2" fill="#d0d8e4"/>
<rect x="4.0" y="11.2" width="2" height="2" fill="#d0d8e4"/>
<rect x="4.0" y="15.2" width="2" height="2" fill="#d0d8e4"/>
<rect x="4.0" y="19.3" width="2" height="2" fill="#d0d8e4"/>
<rect x="4.0" y="23.4" width="2" height="2" fill="#d0d8e4"/>
<rect x="4.0" y="27.5" width="2" height="2" fill="#d0d8e4"/>
<rect x="4.0" y="31.6" width="2" height="2" fill="#d0d8e4"/>
<rect x="4.0" y="35.6" width="2" height="2" fill="#d0d8e4"/>
<rect x="96.0" y="3.0" width="2" height="2" fill="#d0d8e4"/>
<rect x="96.0" y="7.1" width="2" height="2" fill="#d0d8e4"/>
<rect x="96.0" y="11.2" width="2" height="2" fill="#d0d8e4"/>
<rect x="96.0" y="15.2" width="2" height="2" fill="#d0d8e4"/>
<rect x="96.0" y="19.3" width="2" height="2" fill="#d0d8e4"/>
<rect x="96.0" y="23.4" width="2" height="2" fill="#d0d8e4"/>
<rect x="96.0" y="27.5" width="2" height="2" fill="#d0d8e4"/>
<rect x="96.0" y="31.6" width="2" height="2" fill="#d0d8e4"/>
<rect x="96.0" y="35.6" width="2" height="2" fill="#d0d8e4"/>
<rect x="385.4" y="3.0" width="2" height="2" fill="#d0d8e4"/>
<rect x="385.4" y="7.1" width="2" height="2" fill="#d0d8e4"/>
<rect x="385.4" y="11.2" width="2" height="2" fill="#d0d8e4"/>
<rect x="385.4" y="15.2" width="2" height="2" fill="#d0d8e4"/>
<rect x="385.4" y="19.3" width="2" height="2" fill="#d0d8e4"/>
<rect x="385.4" y="23.4" width="2" height="2" fill="#d0d8e4"/>
<rect x="385.4" y="27.5" width="2" height="2" fill="#d0d8e4"/>
<rect x="385.4" y="31.6" width="2" height="2" fill="#d0d8e4"/>
<rect x="385.4" y="35.6" width="2" height="2" fill="#d0d8e4"/>
<rect x="863.2" y="3.0" width="2" height="2" fill="#d0d8e4"/>
<rect x="863.2" y="7.1" width="2" height="2" fill="#d0d8e4"/>
<rect x="863.2" y="11.2" width="2" height="2" fill="#d0d8e4"/>
<rect x="863.2" y="15.2" width="2" height="2" fill="#d0d8e4"/>
<rect x="863.2" y="19.3" width="2" height="2" fill="#d0d8e4"/>
<rect x="863.2" y="23.4" width="2" height="2" fill="#d0d8e4"/>
<rect x="863.2" y="27.5" width="2" height="2" fill="#d0d8e4"/>
<rect x="863.2" y="31.6" width="2" height="2" fill="#d0d8e4"/>
<rect x="863.2" y="35.6" width="2" height="2" fill="#d0d8e4"/>
<rect x="1464.8" y="3.0" width="2" height="2" fill="#d0d8e4"/>
<rect x="1464.8" y="7.1" width="2" height="2" fill="#d0d8e4"/>
<rect x="1464.8" y="11.2" width="2" height="2" fill="#d0d8e4"/>
<rect x="1464.8" y="15.2" width="2" height="2" fill="#d0d8e4"/>
<rect x="1464.8" y="19.3" width="2" height="2" fill="#d0d8e4"/>
<rect x="1464.8" y="23.4" width="2" height="2" fill="#d0d8e4"/>
<rect x="1464.8" y="27.5" width="2" height="2" fill="#d0d8e4"/>
<rect x="1464.8" y="31.6" width="2" height="2" fill="#d0d8e4"/>
<rect x="1464.8" y="35.6" width="2" height="2" fill="#d0d8e4"/>
<rect x="1854.0" y="3.0" width="2" height="2" fill="#d0d8e4"/>
<rect x="1854.0" y="7.1" width="2" height="2" fill="#d0d8e4"/>
<rect x="1854.0" y="11.2" width="2" height="2" fill="#d0d8e4"/>
<rect x="1854.0" y="15.2" width="2" height="2" fill="#d0d8e4"/>
<rect x="1854.0" y="19.3" width="2" height="2" fill="#d0d8e4"/>
<rect x="1854.0" y="23.4" width="2" height="2" fill="#d0d8e4"/>
<rect x="1854.0" y="27.5" width="2" height="2" fill="#d0d8e4"/>
<rect x="1854.0" y="31.6" width="2" height="2" fill="#d0d8e4"/>
<rect x="1854.0" y="35.6" width="2" height="2" fill="#d0d8e4"/>
<rect x="4.0" y="48.8" width="2" height="2" fill="#d0d8e4"/>
<rect x="4.0" y="52.9" width="2" height="2" fill="#d0d8e4"/>
<rect x="4.0" y="57.0" width="2" height="2" fill="#d0d8e4"/>
<rect x="4.0" y="61.0" width="2" height="2" fill="#d0d8e4"/>
<rect x="4.0" y="65.1" width="2" height="2" fill="#d0d8e4"/>
<rect x="4.0" y="69.2" width="2" height="2" fill="#d0d8e4"/>
<rect x="4.0" y="73.3" width="2" height="2" fill="#d0d8e4"/>
<rect x="4.0" y="77.4" width="2" height="2" fill="#d0d8e4"/>
<rect x="4.0" y="81.4" width="2" height="2" fill="#d0d8e4"/>
<rect x="961.0" y="48.8" width="2" height="2" fill="#d0d8e4"/>
<rect x="961.0" y="52.9" width="2" height="2" fill="#d0d8e4"/>
<rect x="961.0" y="57.0" width="2" height="2" fill="#d0d8e4"/>
<rect x="961.0" y="61.0" width="2" height="2" fill="#d0d8e4"/>
<rect x="961.0" y="65.1" width="2" height="2" fill="#d0d8e4"/>
<rect x="961.0" y="69.2" width="2" height="2" fill="#d0d8e4"/>
<rect x="961.0" y="73.3" width="2" height="2" fill="#d0d8e4"/>
<rect x="961.0" y="77.4" width="2" height="2" fill="#d0d8e4"/>
<rect x="961.0" y="81.4" width="2" height="2" fill="#d0d8e4"/>
<rect x="1150.0" y="48.8" width="2" height="2" fill="#d0d8e4"/>
<rect x="1150.0" y="52.9" width="2" height="2" fill="#d0d8e4"/>
<rect x="1150.0" y="57.0" width="2" height="2" fill="#d0d8e4"/>
<rect x="1150.0" y="61.0" width="2" height="2" fill="#d0d8e4"/>
<rect x="1150.0" y="65.1" width="2" height="2" fill="#d0d8e4"/>
<rect x="1150.0" y="69.2" width="2" height="2" fill="#d0d8e4"/>
<rect x="1150.0" y="73.3" width="2" height="2" fill="#d0d8e4"/>
<rect x="1150.0" y="77.4" width="2" height="2" fill="#d0d8e4"/>
<rect x="1150.0" y="81.4" width="2" height="2" fill="#d0d8e4"/>
<rect x="1286.9" y="48.8" width="2" height="2" fill="#d0d8e4"/>
<rect x="1286.9" y="52.9" width="2" height="2" fill="#d0d8e4"/>
<rect x="1286.9" y="57.0" width="2" height="2" fill="#d0d8e4"/>
<rect x="1286.9" y="61.0" width="2" height="2" fill="#d0d8e4"/>
<rect x="1286.9" y="65.1" width="2" height="2" fill="#d0d8e4"/>
<rect x="1286.9" y="69.2" width="2" height="2" fill="#d0d8e4"/>
<rect x="1286.9" y="73.3" width="2" height="2" fill="#d0d8e4"/>
<rect x="1286.9" y="77.4" width="2" height="2" fill="#d0d8e4"/>
<rect x="1286.9" y="81.4" width="2" height="2" fill="#d0d8e4"/>
<rect x="13.5" y="2.5" width="36.0" height="36.0" fill="#33445b" stroke="#fff" stroke-width="1.1"/>
<rect x="1094.3" y="2.8" width="36.1" height="35.5" fill="#33445b" stroke="#fff" stroke-width="1.1"/>
<rect x="970.6" y="47.8" width="36.0" height="35.6" fill="#33445b" stroke="#fff" stroke-width="1.1"/>
<rect x="1333.5" y="47.8" width="36.0" height="35.6" fill="#33445b" stroke="#fff" stroke-width="1.1"/>
<g filter="url(#ds)">
<rect x="19.5" y="9.4" width="23.8" height="21.9" rx="2" fill="url(#lgb)" stroke="#1b2534" stroke-width=".8"/>
<g transform="translate(56.6,8.8) scale(1.06)"><path d="M0 4.5a1.5 1.5 0 0 1 1.5-1.5H5l1.6-3h7l1.6 3h3.3a1.5 1.5 0 0 1 1.5 1.5v10a1.5 1.5 0 0 1-1.5 1.5h-17A1.500 1.500 0 0 1 0 14.500z" fill="#a9cbee"/><rect x="7.6" y="1" width="5" height="1.6" rx=".8" fill="#e8eef5"/><circle cx="10" cy="9.6" r="5.2" fill="#2b3950"/><circle cx="10" cy="9.6" r="3.2" fill="#d8d8d8"/></g>
<g transform="translate(66.8,18.2) scale(1.04)"><path d="M0 0h10.5l2.5 2.5V13.500H0z" fill="#a9cbee" stroke="#1d2838" stroke-width=".6"/><rect x="2.5" y=".8" width="7" height="4.6" fill="#56616f"/><rect x="6.8" y="1.5" width="1.6" height="3" fill="#ddd"/><rect x="2.3" y="7.2" width="8.4" height="5.6" fill="#efe9d6"/></g>
<g transform="translate(110,9.2)"><path d="M0.9 1L0.1 13.4L12.9 13.4L9.6 10C15.3 9 20.5 13 22.600 21.6C26.2 16 26.2 8.5 21.5 4.5C17 0.8 10.500 1.5 6.300 5.900z" fill="url(#lgl)"/></g>
<g transform="translate(172.8,9.2) scale(-1,1)"><path d="M0.9 1L0.1 13.4L12.9 13.4L9.6 10C15.3 9 20.5 13 22.600 21.6C26.2 16 26.2 8.5 21.5 4.5C17 0.8 10.500 1.5 6.300 5.900z" fill="url(#lgw)"/></g>
<g transform="translate(189.4,8.6)" fill="none" stroke-linecap="round"><path d="M5.5 14.500L23.500 5.600" stroke="#f3f6fa" stroke-width="2"/><path d="M10.500 18.500L14.800 0.800" stroke="#f3f6fa" stroke-width="2"/><ellipse cx="3.6" cy="14.800" rx="2.900" ry="2.200" stroke="#a9cbee" stroke-width="1.500" transform="rotate(-25 3.600 14.800)"/><ellipse cx="9.600" cy="20.700" rx="2.200" ry="2.900" stroke="#a9cbee" stroke-width="1.500" transform="rotate(-12 9.600 20.700)"/></g>
<path d="M227 9h9.600l3.400 3.400V26.500H227z" fill="url(#lgw)"/><path d="M234.800 13.800h9.800l4 4V31h-13.800z" fill="#a9cbee" stroke="#1d2838" stroke-width=".5"/><path d="M244.600 13.800v4h4z" fill="#dbe9f8"/>
<rect x="265.400" y="10.200" width="19.400" height="21" rx="1.500" fill="#8db7e4"/><rect x="268" y="12.600" width="14.200" height="16.600" fill="#f4f6f9"/><path d="M270.500 9.800h2.800a1.800 1.800 0 0 1 3.600 0h2.800v3h-9.200z" fill="#e9eef4"/><path d="M270.400 17h9.400M270.400 20.600h9.400M270.400 24.200h9.400" stroke="#8db7e4" stroke-width="1.700"/>
<g transform="translate(307.6,9) scale(1.0)"><path d="M1.600 7.200h13.600l-1.700 15.300a1 1 0 0 1-1 .9H4.300a1 1 0 0 1-1-.9z" fill="url(#lgl)"/><path d="M0 4.300q8.400-2.400 16.800 0v1.800H0z" fill="#a9cbee"/><rect x="6.600" y="0" width="3.600" height="3.400" rx="1.200" fill="#a9cbee"/></g>
<g transform="translate(345.6,8.6)"><path d="M0 15.500L11.500 21.900 23 15.500 11.500 9.100z" fill="#e3e6ea"/><path d="M0 12L11.500 18.400 23 12 11.500 5.600z" fill="#f7f8fa" stroke="#2a3647" stroke-width=".5"/><path d="M0 7.200L11.500 14.200 23 7.200 11.500 0.200z" fill="#8db7e4" stroke="#2a3647" stroke-width=".5"/></g>
<path d="M353.5 15.8H360.70000000000005M357.1 12.200000000000001V19.400000000000002" stroke="#1b2433" stroke-width="4.6" stroke-linecap="round"/><path d="M353.5 15.8H360.70000000000005M357.1 12.200000000000001V19.400000000000002" stroke="#fff" stroke-width="2.8" stroke-linecap="round"/>
<g transform="translate(399.4,11.4) scale(1.22)"><path d="M0 4.5a1.5 1.5 0 0 1 1.5-1.5H5l1.6-3h7l1.6 3h3.3a1.5 1.5 0 0 1 1.5 1.5v10a1.5 1.5 0 0 1-1.5 1.5h-17A1.500 1.500 0 0 1 0 14.500z" fill="#a9cbee"/><rect x="7.6" y="1" width="5" height="1.6" rx=".8" fill="#e8eef5"/><circle cx="10" cy="9.6" r="5.2" fill="#2b3950"/><circle cx="10" cy="9.6" r="3.2" fill="#cfcfcf"/></g>
<path d="M412.0 26.4H422.79999999999995M417.4 21.0V31.799999999999997" stroke="#1b2433" stroke-width="5.2" stroke-linecap="round"/><path d="M412.0 26.4H422.79999999999995M417.4 21.0V31.799999999999997" stroke="#fff" stroke-width="3.4" stroke-linecap="round"/>
<path d="M453.1 8.3L463.7 13.8L453.1 19.6L442.5 13.8z" fill="#eceef1"/><path d="M442.5 13.8L453.1 19.6L453.1 31.0L442.5 25.4z" fill="#92b9e4"/><path d="M453.1 19.6L463.7 13.8L463.7 25.4L453.1 31.0z" fill="#d3d5d9"/><path d="M453.1 19.6L442.5 13.8M453.1 19.6L463.70000000000005 13.8M453.1 19.6L453.1 31" stroke="#fff" stroke-width="1" opacity=".85"/><path d="M453.1 8.3L463.7 13.8L463.7 25.4L453.1 31.0L442.5 25.4L442.5 13.8z" fill="none" stroke="#fff" stroke-width=".6" opacity=".5"/>
<path d="M490.0 8.3L500.6 13.8L490.0 19.6L479.4 13.8z" fill="#eceef1"/><path d="M479.4 13.8L490.0 19.6L490.0 31.0L479.4 25.4z" fill="#e2e4e8"/><path d="M490.0 19.6L500.6 13.8L500.6 25.4L490.0 31.0z" fill="#d3d5d9"/><path d="M490.0 8.3L500.6 13.8L500.6 25.4L490.0 19.6z" fill="#92b9e4" opacity=".92"/><path d="M490 19.6L479.4 13.8M490 19.6L500.6 13.8M490 19.6L490 31" stroke="#fff" stroke-width="1" opacity=".85"/><path d="M490.0 8.3L500.6 13.8L500.6 25.4L490.0 31.0L479.4 25.4L479.4 13.8z" fill="none" stroke="#fff" stroke-width=".6" opacity=".5"/>
<path d="M527.1 8.3L537.7 13.8L527.1 19.6L516.5 13.8z" fill="#eceef1"/><path d="M516.5 13.8L527.1 19.6L527.1 31.0L516.5 25.4z" fill="#e2e4e8"/><path d="M527.1 19.6L537.7 13.8L537.7 25.4L527.1 31.0z" fill="#92b9e4"/><path d="M527.1 19.6L516.5 13.8M527.1 19.6L537.7 13.8M527.1 19.6L527.1 31" stroke="#fff" stroke-width="1" opacity=".85"/><path d="M527.1 8.3L537.7 13.8L537.7 25.4L527.1 31.0L516.5 25.4L516.5 13.8z" fill="none" stroke="#fff" stroke-width=".6" opacity=".5"/>
<path d="M563.9 8.3L574.5 13.8L563.9 19.6L553.3 13.8z" fill="#eceef1"/><path d="M553.3 13.8L563.9 19.6L563.9 31.0L553.3 25.4z" fill="#e2e4e8"/><path d="M563.9 19.6L574.5 13.8L574.5 25.4L563.9 31.0z" fill="#d3d5d9"/><path d="M563.9 8.3L563.9 19.6L553.3 25.4L553.3 13.8z" fill="#92b9e4" opacity=".92"/><path d="M563.9 19.6L553.3 13.8M563.9 19.6L574.5 13.8M563.9 19.6L563.9 31" stroke="#fff" stroke-width="1" opacity=".85"/><path d="M563.9 8.3L574.5 13.8L574.5 25.4L563.9 31.0L553.3 25.4L553.3 13.8z" fill="none" stroke="#fff" stroke-width=".6" opacity=".5"/>
<path d="M601.0 8.3L611.6 13.8L601.0 19.6L590.4 13.8z" fill="#92b9e4"/><path d="M590.4 13.8L601.0 19.6L601.0 31.0L590.4 25.4z" fill="#e2e4e8"/><path d="M601.0 19.6L611.6 13.8L611.6 25.4L601.0 31.0z" fill="#d3d5d9"/><path d="M601 19.6L590.4 13.8M601 19.6L611.6 13.8M601 19.6L601 31" stroke="#fff" stroke-width="1" opacity=".85"/><path d="M601.0 8.3L611.6 13.8L611.6 25.4L601.0 31.0L590.4 25.4L590.4 13.8z" fill="none" stroke="#fff" stroke-width=".6" opacity=".5"/>
<path d="M637.9 8.3L648.5 13.8L637.9 19.6L627.3 13.8z" fill="#eceef1"/><path d="M627.3 13.8L637.9 19.6L637.9 31.0L627.3 25.4z" fill="#e2e4e8"/><path d="M637.9 19.6L648.5 13.8L648.5 25.4L637.9 31.0z" fill="#d3d5d9"/><path d="M637.9 19.6L648.5 25.4L637.9 31.0L627.3 25.4z" fill="#92b9e4" opacity=".92"/><path d="M637.9 19.6L627.3 13.8M637.9 19.6L648.5 13.8M637.9 19.6L637.9 31" stroke="#fff" stroke-width="1" opacity=".85"/><path d="M637.9 8.3L648.5 13.8L648.5 25.4L637.9 31.0L627.3 25.4L627.3 13.8z" fill="none" stroke="#fff" stroke-width=".6" opacity=".5"/>
<line x1="682.0" y1="23.0" x2="688.8" y2="29.8" stroke="#e4e9ef" stroke-width="3" stroke-linecap="round"/><circle cx="677" cy="18" r="7" fill="#9fc3ea" stroke="#e9edf2" stroke-width="1.800"/><path d="M673.1 18H680.9M677 14.1V21.9" stroke="#fff" stroke-width="2.600"/>
<line x1="719.0" y1="23.0" x2="725.8" y2="29.8" stroke="#e4e9ef" stroke-width="3" stroke-linecap="round"/><circle cx="714" cy="18" r="7" fill="#9fc3ea" stroke="#e9edf2" stroke-width="1.800"/><path d="M710.1 18H717.9" stroke="#fff" stroke-width="2.600"/>
<path d="M738.600 13.500V5.600h8.600M758.600 5.600h8.600v7.900M767.200 26.500v7.900h-8.600M747.200 34.400h-8.600v-7.900" fill="none" stroke="#7aa9dd" stroke-width="2"/>
<line x1="757.7" y1="23.3" x2="763.6" y2="29.2" stroke="#e4e9ef" stroke-width="3" stroke-linecap="round"/><circle cx="751.8" cy="17.4" r="8.2" fill="#9fc3ea" stroke="#e9edf2" stroke-width="1.800"/>
<path d="M782 19.400C787 12.400 800.800 12.400 805.800 19.400C800.800 26.600 787 26.600 782 19.400z" fill="#cfe2f6"/><circle cx="793.900" cy="19.400" r="5" fill="#2b3950"/><circle cx="793.900" cy="19.400" r="2.300" fill="#cfe2f6"/>
<path d="M0 0h7.200l-2.400 2.400 3.600 3.600-2.400 2.400-3.600-3.600L0 7.200z" transform="translate(824.8,9.9) scale(1,1)" fill="#a9cbee"/>
<path d="M0 0h7.200l-2.400 2.400 3.600 3.600-2.400 2.400-3.600-3.600L0 7.200z" transform="translate(844.8,9.9) scale(-1,1)" fill="#a9cbee"/>
<path d="M0 0h7.200l-2.400 2.400 3.600 3.600-2.400 2.400-3.600-3.600L0 7.200z" transform="translate(824.8,29.9) scale(1,-1)" fill="#a9cbee"/>
<path d="M0 0h7.200l-2.400 2.400 3.600 3.600-2.400 2.400-3.600-3.600L0 7.200z" transform="translate(844.8,29.9) scale(-1,-1)" fill="#a9cbee"/>
</g><g filter="url(#ds)">
<defs><linearGradient id="lgwb" x1="0" y1="0" x2="1" y2="1"><stop offset="0" stop-color="#ffffff"/><stop offset="1" stop-color="#b9d4f0"/></linearGradient></defs>
<path d="M875.4 15.7L876 20.7 879.5 18.8 881 24.4 884.8 21.9 886.700 28.2 890.1 25.7 892.3 31.3" fill="none" stroke="#fff" stroke-width="3" stroke-linecap="round" stroke-linejoin="round"/>
<path d="M892.4 7.6q-7.400 0.600-11 5.400l-1.600-2.400-1.600 6.800 6.600-1.800-1.800-1.400q3.800-3.400 9.400-3.800z" fill="#fff"/>
<path d="M899.8 7.500L894.2 10.600 901.100 14.400 894.800 18.800 901.100 22.500 895.400 26.300 899.200 30.100" fill="none" stroke="#f0450f" stroke-width="3.900" stroke-linejoin="round"/>
<path d="M898.500 8.200L894.2 10.600M900 14.800L894.800 18.800M900 23L895.400 26.300" fill="none" stroke="#f2e010" stroke-width="2.800"/>
<path d="M899.200 30.600q5.600-1.200 6.200-6.800" fill="none" stroke="#e8501a" stroke-width="1"/>
<circle cx="926" cy="18.200" r="9.400" fill="url(#rgs)"/>
<path d="M927.1999999999999 25.8H937.6M932.4 20.6V31.0" stroke="#1b2433" stroke-width="5.2" stroke-linecap="round"/><path d="M927.1999999999999 25.8H937.6M932.4 20.6V31.0" stroke="#fff" stroke-width="3.4" stroke-linecap="round"/>
<path transform="translate(952,13.8) scale(0.98)" d="M0 0L17 8.200 10.200 10.400 14.800 17.200 11.800 19.200 7.200 12.400 3 17.400z" fill="url(#lgwb)" stroke="#1b2433" stroke-width=".7"/>
<g transform="translate(970.400,13.400)"><rect x="-1.300" y="-6.800" width="2.600" height="3" fill="#e8edf3" transform="rotate(0)"/><rect x="-1.300" y="-6.800" width="2.600" height="3" fill="#e8edf3" transform="rotate(45)"/><rect x="-1.300" y="-6.800" width="2.600" height="3" fill="#e8edf3" transform="rotate(90)"/><rect x="-1.300" y="-6.800" width="2.600" height="3" fill="#e8edf3" transform="rotate(135)"/><rect x="-1.300" y="-6.800" width="2.600" height="3" fill="#e8edf3" transform="rotate(180)"/><rect x="-1.300" y="-6.800" width="2.600" height="3" fill="#e8edf3" transform="rotate(225)"/><rect x="-1.300" y="-6.800" width="2.600" height="3" fill="#e8edf3" transform="rotate(270)"/><rect x="-1.300" y="-6.800" width="2.600" height="3" fill="#e8edf3" transform="rotate(315)"/><circle r="4.600" fill="#e8edf3"/><circle r="2.800" fill="#7aa9dd"/><circle r="1.500" fill="#e8edf3"/></g>
<g transform="translate(1000.500,19.500) rotate(-38)"><rect x="-11.500" y="-5.500" width="12" height="11" rx="1" fill="#f4f5f7"/><rect x=".5" y="-5.500" width="10.500" height="11" rx="1" fill="#8db7e4"/></g><path d="M998 30.300h12.500" stroke="#10161f" stroke-width="1.200"/>
</g>
<rect x="1022.100" y="3.900" width="32.100" height="32.100" fill="#fff"/>
<clipPath id="cg"><rect x="1022.100" y="3.900" width="32.100" height="32.100"/></clipPath><g clip-path="url(#cg)" fill="none" stroke="#a8a8a8" stroke-width="1"><polygon points="1016.8,2.4 1022.1,-0.7 1022.1,-6.8 1016.8,-9.8 1011.5,-6.8 1011.5,-0.7"/><polygon points="1027.4,2.4 1032.7,-0.7 1032.7,-6.8 1027.4,-9.8 1022.1,-6.8 1022.1,-0.7"/><polygon points="1037.9,2.4 1043.2,-0.7 1043.2,-6.8 1037.9,-9.8 1032.7,-6.8 1032.7,-0.7"/><polygon points="1048.5,2.4 1053.8,-0.7 1053.8,-6.8 1048.5,-9.8 1043.2,-6.8 1043.2,-0.7"/><polygon points="1059.1,2.4 1064.4,-0.7 1064.4,-6.8 1059.1,-9.8 1053.8,-6.8 1053.8,-0.7"/><polygon points="1069.6,2.4 1074.9,-0.7 1074.9,-6.8 1069.6,-9.8 1064.4,-6.8 1064.4,-0.7"/><polygon points="1080.2,2.4 1085.5,-0.7 1085.5,-6.8 1080.2,-9.8 1074.9,-6.8 1074.9,-0.7"/><polygon points="1011.5,11.5 1016.8,8.5 1016.8,2.4 1011.5,-0.7 1006.3,2.3 1006.3,8.5"/><polygon points="1022.1,11.5 1027.4,8.5 1027.4,2.4 1022.1,-0.7 1016.8,2.3 1016.8,8.5"/><polygon points="1032.7,11.5 1037.9,8.5 1037.9,2.4 1032.7,-0.7 1027.4,2.3 1027.4,8.5"/><polygon points="1043.2,11.5 1048.5,8.5 1048.5,2.4 1043.2,-0.7 1037.9,2.3 1037.9,8.5"/><polygon points="1053.8,11.5 1059.1,8.5 1059.1,2.4 1053.8,-0.7 1048.5,2.3 1048.5,8.5"/><polygon points="1064.4,11.5 1069.6,8.5 1069.6,2.4 1064.4,-0.7 1059.1,2.3 1059.1,8.5"/><polygon points="1074.9,11.5 1080.2,8.5 1080.2,2.4 1074.9,-0.7 1069.6,2.3 1069.6,8.5"/><polygon points="1016.8,20.6 1022.1,17.6 1022.1,11.5 1016.8,8.4 1011.5,11.5 1011.5,17.6"/><polygon points="1027.4,20.6 1032.7,17.6 1032.7,11.5 1027.4,8.4 1022.1,11.5 1022.1,17.6"/><polygon points="1037.9,20.6 1043.2,17.6 1043.2,11.5 1037.9,8.4 1032.7,11.5 1032.7,17.6"/><polygon points="1048.5,20.6 1053.8,17.6 1053.8,11.5 1048.5,8.4 1043.2,11.5 1043.2,17.6"/><polygon points="1059.1,20.6 1064.4,17.6 1064.4,11.5 1059.1,8.4 1053.8,11.5 1053.8,17.6"/><polygon points="1069.6,20.6 1074.9,17.6 1074.9,11.5 1069.6,8.4 1064.4,11.5 1064.4,17.6"/><polygon points="1080.2,20.6 1085.5,17.6 1085.5,11.5 1080.2,8.4 1074.9,11.5 1074.9,17.6"/><polygon points="1011.5,29.8 1016.8,26.7 1016.8,20.6 1011.5,17.6 1006.3,20.6 1006.3,26.7"/><polygon points="1022.1,29.8 1027.4,26.7 1027.4,20.6 1022.1,17.6 1016.8,20.6 1016.8,26.7"/><polygon points="1032.7,29.8 1037.9,26.7 1037.9,20.6 1032.7,17.6 1027.4,20.6 1027.4,26.7"/><polygon points="1043.2,29.8 1048.5,26.7 1048.5,20.6 1043.2,17.6 1037.9,20.6 1037.9,26.7"/><polygon points="1053.8,29.8 1059.1,26.7 1059.1,20.6 1053.8,17.6 1048.5,20.6 1048.5,26.7"/><polygon points="1064.4,29.8 1069.6,26.7 1069.6,20.6 1064.4,17.6 1059.1,20.6 1059.1,26.7"/><polygon points="1074.9,29.8 1080.2,26.7 1080.2,20.6 1074.9,17.6 1069.6,20.6 1069.6,26.7"/><polygon points="1016.8,38.9 1022.1,35.9 1022.1,29.8 1016.8,26.7 1011.5,29.8 1011.5,35.9"/><polygon points="1027.4,38.9 1032.7,35.9 1032.7,29.8 1027.4,26.7 1022.1,29.8 1022.1,35.9"/><polygon points="1037.9,38.9 1043.2,35.9 1043.2,29.8 1037.9,26.7 1032.7,29.8 1032.7,35.9"/><polygon points="1048.5,38.9 1053.8,35.9 1053.8,29.8 1048.5,26.7 1043.2,29.8 1043.2,35.9"/><polygon points="1059.1,38.9 1064.4,35.9 1064.4,29.8 1059.1,26.7 1053.8,29.8 1053.8,35.9"/><polygon points="1069.6,38.9 1074.9,35.9 1074.9,29.8 1069.6,26.7 1064.4,29.8 1064.4,35.9"/><polygon points="1080.2,38.9 1085.5,35.9 1085.5,29.8 1080.2,26.7 1074.9,29.8 1074.9,35.9"/><polygon points="1011.5,48.1 1016.8,45.0 1016.8,38.9 1011.5,35.9 1006.3,38.9 1006.3,45.0"/><polygon points="1022.1,48.1 1027.4,45.0 1027.4,38.9 1022.1,35.9 1016.8,38.9 1016.8,45.0"/><polygon points="1032.7,48.1 1037.9,45.0 1037.9,38.9 1032.7,35.9 1027.4,38.9 1027.4,45.0"/><polygon points="1043.2,48.1 1048.5,45.0 1048.5,38.9 1043.2,35.9 1037.9,38.9 1037.9,45.0"/><polygon points="1053.8,48.1 1059.1,45.0 1059.1,38.9 1053.8,35.9 1048.5,38.9 1048.5,45.0"/><polygon points="1064.4,48.1 1069.6,45.0 1069.6,38.9 1064.4,35.9 1059.1,38.9 1059.1,45.0"/><polygon points="1074.9,48.1 1080.2,45.0 1080.2,38.9 1074.9,35.9 1069.6,38.9 1069.6,45.0"/><polygon points="1016.8,57.2 1022.1,54.2 1022.1,48.1 1016.8,45.0 1011.5,48.1 1011.5,54.2"/><polygon points="1027.4,57.2 1032.7,54.2 1032.7,48.1 1027.4,45.0 1022.1,48.1 1022.1,54.2"/><polygon points="1037.9,57.2 1043.2,54.2 1043.2,48.1 1037.9,45.0 1032.7,48.1 1032.7,54.2"/><polygon points="1048.5,57.2 1053.8,54.2 1053.8,48.1 1048.5,45.0 1043.2,48.1 1043.2,54.2"/><polygon points="1059.1,57.2 1064.4,54.2 1064.4,48.1 1059.1,45.0 1053.8,48.1 1053.8,54.2"/><polygon points="1069.6,57.2 1074.9,54.2 1074.9,48.1 1069.6,45.0 1064.4,48.1 1064.4,54.2"/><polygon points="1080.2,57.2 1085.5,54.2 1085.5,48.1 1080.2,45.0 1074.9,48.1 1074.9,54.2"/></g>
<g filter="url(#ds)">
<path d="M1061 14.500C1062 10 1070 5.500 1076 6.200S1086.500 10.500 1085.800 14.500 1079 19.500 1075.500 22.500 1067.500 23.500 1065.500 21.500 1060.500 17.500 1061 14.500z" fill="url(#lgl)"/>
<path transform="translate(1077,20.2) scale(0.66)" d="M0 0L17 8.200 10.200 10.400 14.800 17.200 11.800 19.200 7.200 12.400 3 17.400z" fill="url(#lgwb)" stroke="#1b2433" stroke-width=".7"/>
<g transform="translate(1101.300,12.500) scale(1.100)"><path d="M0 4.500a1.500 1.500 0 0 1 1.500-1.500H5l1.600-3h7l1.600 3h3.300a1.500 1.500 0 0 1 1.500 1.500v10a1.500 1.500 0 0 1-1.500 1.500h-17A1.500 1.500 0 0 1 0 14.500z" transform="scale(.95,.82)" fill="#8db7e4"/><rect x="7" y=".6" width="4.800" height="1.500" rx=".7" fill="#e8eef5"/><circle cx="9.500" cy="7.800" r="4.300" fill="#2b3950"/><circle cx="9.500" cy="7.800" r="2.700" fill="#cfcfcf"/></g>
<path d="M1099 11.500q12.500-7.500 24-2.800l1.200-2.300 2.200 6.800-7.200-.6 1.800-1.800q-10-3.400-21 2.200z" fill="#f3f6fa"/>
<path d="M1125.600 29.500q-12.500 7.500-24 2.800l-1.200 2.300-2.200-6.800 7.200.6-1.800 1.800q10 3.400 21-2.200z" fill="#f3f6fa"/>
</g>
<rect x="1133" y="3.900" width="31.900" height="32.100" fill="url(#lgm)"/>
<g fill="#3a4656" opacity=".85"><rect x="1136.0" y="14.0" width="1.700" height="1.600" rx=".5"/><rect x="1138.5" y="14.0" width="1.700" height="1.600" rx=".5"/><rect x="1141.0" y="14.0" width="1.700" height="1.600" rx=".5"/><rect x="1143.5" y="14.0" width="1.700" height="1.600" rx=".5"/><rect x="1146.0" y="14.0" width="1.700" height="1.600" rx=".5"/><rect x="1148.5" y="14.0" width="1.700" height="1.600" rx=".5"/><rect x="1151.0" y="14.0" width="1.700" height="1.600" rx=".5"/><rect x="1153.5" y="14.0" width="1.700" height="1.600" rx=".5"/><rect x="1156.0" y="14.0" width="1.700" height="1.600" rx=".5"/><rect x="1158.5" y="14.0" width="1.700" height="1.600" rx=".5"/><rect x="1161.0" y="14.0" width="1.700" height="1.600" rx=".5"/><rect x="1137.2" y="16.5" width="1.700" height="1.600" rx=".5"/><rect x="1139.7" y="16.5" width="1.700" height="1.600" rx=".5"/><rect x="1142.2" y="16.5" width="1.700" height="1.600" rx=".5"/><rect x="1144.7" y="16.5" width="1.700" height="1.600" rx=".5"/><rect x="1147.2" y="16.5" width="1.700" height="1.600" rx=".5"/><rect x="1149.7" y="16.5" width="1.700" height="1.600" rx=".5"/><rect x="1152.2" y="16.5" width="1.700" height="1.600" rx=".5"/><rect x="1154.7" y="16.5" width="1.700" height="1.600" rx=".5"/><rect x="1157.2" y="16.5" width="1.700" height="1.600" rx=".5"/><rect x="1159.7" y="16.5" width="1.700" height="1.600" rx=".5"/><rect x="1162.2" y="16.5" width="1.700" height="1.600" rx=".5"/><rect x="1136.0" y="19.0" width="1.700" height="1.600" rx=".5"/><rect x="1138.5" y="19.0" width="1.700" height="1.600" rx=".5"/><rect x="1141.0" y="19.0" width="1.700" height="1.600" rx=".5"/><rect x="1143.5" y="19.0" width="1.700" height="1.600" rx=".5"/><rect x="1146.0" y="19.0" width="1.700" height="1.600" rx=".5"/><rect x="1148.5" y="19.0" width="1.700" height="1.600" rx=".5"/><rect x="1151.0" y="19.0" width="1.700" height="1.600" rx=".5"/><rect x="1153.5" y="19.0" width="1.700" height="1.600" rx=".5"/><rect x="1156.0" y="19.0" width="1.700" height="1.600" rx=".5"/><rect x="1158.5" y="19.0" width="1.700" height="1.600" rx=".5"/><rect x="1161.0" y="19.0" width="1.700" height="1.600" rx=".5"/><rect x="1137.2" y="21.5" width="1.700" height="1.600" rx=".5"/><rect x="1139.7" y="21.5" width="1.700" height="1.600" rx=".5"/><rect x="1142.2" y="21.5" width="1.700" height="1.600" rx=".5"/><rect x="1144.7" y="21.5" width="1.700" height="1.600" rx=".5"/><rect x="1147.2" y="21.5" width="1.700" height="1.600" rx=".5"/><rect x="1149.7" y="21.5" width="1.700" height="1.600" rx=".5"/><rect x="1152.2" y="21.5" width="1.700" height="1.600" rx=".5"/><rect x="1154.7" y="21.5" width="1.700" height="1.600" rx=".5"/><rect x="1157.2" y="21.5" width="1.700" height="1.600" rx=".5"/><rect x="1159.7" y="21.5" width="1.700" height="1.600" rx=".5"/><rect x="1162.2" y="21.5" width="1.700" height="1.600" rx=".5"/><rect x="1136.0" y="24.0" width="1.700" height="1.600" rx=".5"/><rect x="1138.5" y="24.0" width="1.700" height="1.600" rx=".5"/><rect x="1141.0" y="24.0" width="1.700" height="1.600" rx=".5"/><rect x="1143.5" y="24.0" width="1.700" height="1.600" rx=".5"/><rect x="1146.0" y="24.0" width="1.700" height="1.600" rx=".5"/><rect x="1148.5" y="24.0" width="1.700" height="1.600" rx=".5"/><rect x="1151.0" y="24.0" width="1.700" height="1.600" rx=".5"/><rect x="1153.5" y="24.0" width="1.700" height="1.600" rx=".5"/><rect x="1156.0" y="24.0" width="1.700" height="1.600" rx=".5"/><rect x="1158.5" y="24.0" width="1.700" height="1.600" rx=".5"/><rect x="1161.0" y="24.0" width="1.700" height="1.600" rx=".5"/><rect x="1137.2" y="26.5" width="1.700" height="1.600" rx=".5"/><rect x="1139.7" y="26.5" width="1.700" height="1.600" rx=".5"/><rect x="1142.2" y="26.5" width="1.700" height="1.600" rx=".5"/><rect x="1144.7" y="26.5" width="1.700" height="1.600" rx=".5"/><rect x="1147.2" y="26.5" width="1.700" height="1.600" rx=".5"/><rect x="1149.7" y="26.5" width="1.700" height="1.600" rx=".5"/><rect x="1152.2" y="26.5" width="1.700" height="1.600" rx=".5"/><rect x="1154.7" y="26.5" width="1.700" height="1.600" rx=".5"/><rect x="1157.2" y="26.5" width="1.700" height="1.600" rx=".5"/><rect x="1159.7" y="26.5" width="1.700" height="1.600" rx=".5"/><rect x="1162.2" y="26.5" width="1.700" height="1.600" rx=".5"/></g>
<rect x="1170.600" y="6" width="4.900" height="9" fill="#9fc08a"/><rect x="1170.600" y="15.500" width="4.900" height="8.700" fill="#f2a91e"/><rect x="1170.600" y="24.700" width="4.900" height="9" fill="#f2a91e"/><rect x="1176" y="15.500" width="5" height="8.700" fill="#f5e86a"/><rect x="1176" y="24.700" width="5" height="9" fill="#f5e86a"/><rect x="1182" y="6" width="19.500" height="27.700" fill="#efe9dc"/>
<text x="1183.400" y="20.200" font-size="5.500" font-weight="bold" fill="#333">H</text><text x="1183.200" y="27.200" font-size="2.600" fill="#555">Hydrogen</text><text x="1183.200" y="32.400" font-size="2.600" fill="#555">1.00794</text><text x="1171.800" y="12" font-size="2.600" fill="#b33">H</text>
<g filter="url(#ds)">
<path transform="translate(1215.6,10.6) scale(1.0)" d="M0 0L17 8.200 10.200 10.400 14.800 17.200 11.800 19.200 7.200 12.400 3 17.400z" fill="url(#lgwb)" stroke="#1b2433" stroke-width=".7"/>
<rect x="1246.900" y="6.600" width="15.700" height="13.400" fill="url(#lgl)" stroke="#dfe9f4" stroke-width=".5"/>
<path transform="translate(1262.6,19.6) scale(0.7)" d="M0 0L17 8.200 10.200 10.400 14.800 17.200 11.800 19.200 7.200 12.400 3 17.400z" fill="url(#lgwb)" stroke="#1b2433" stroke-width=".7"/>
<path d="M1305.800 11.800A11.800 11.800 0 1 0 1308.800 19.600" fill="none" stroke="#a9cbee" stroke-width="1.400"/><path d="M1302.400 10.200l5.600-1.600-.8 6z" fill="#a9cbee"/>
<rect x="1322.200" y="14.300" width="24.800" height="13" rx="1.600" fill="url(#lgl)" stroke="#10161f" stroke-width=".8"/><path d="M1326.400 14.800v5M1330.500 14.800v7.500M1334.600 14.800v5M1338.700 14.800v7.500M1342.800 14.800v5" stroke="#1d2838" stroke-width="1.300"/>
<rect x="1355.600" y="4.600" width="30.700" height="30.700" fill="none" stroke="#c9c9c5" stroke-width="1.400"/><text x="1360.600" y="29" font-family="Liberation Serif, serif" font-size="21.500" fill="#ece9df">Sy</text>
<path d="M1408 12v11.500l-8.800 4.800M1408 23.500l8.800 4.800" fill="none" stroke="#a9cbee" stroke-width="1.500"/><path d="M1408 8.400l2.600 3.800h-5.200zM1396.400 29.200l3.800-2.400 1 3zM1419.600 29.200l-3.800-2.400-1 3z" fill="#a9cbee"/><circle cx="1408" cy="23.500" r="1.400" fill="#a9cbee"/>
</g>
<path d="M1444.8 18.0l3 2.600-3 2.600M1449.2 18.0l3 2.600-3 2.600" fill="none" stroke="#05070c" stroke-width="1.500"/>
<path d="M1834.2 18.0l3 2.600-3 2.600M1838.6000000000001 18.0l3 2.600-3 2.600" fill="none" stroke="#05070c" stroke-width="1.500"/>
<path d="M1904 18.0l3 2.600-3 2.600M1908.4 18.0l3 2.600-3 2.600" fill="none" stroke="#05070c" stroke-width="1.500"/>
<rect x="1474.800" y="6" width="198.500" height="27.700" rx="2" fill="#fff" stroke="#172130" stroke-width="1"/>
<line x1="1486" y1="19" x2="1493.500" y2="25.500" stroke="#5d7fb5" stroke-width="2.600"/><circle cx="1494" cy="25.400" r="2.500" fill="#4a6695"/><circle cx="1486.200" cy="17.600" r="5.800" fill="url(#rgg)"/>
<path d="M1655.700 16.100h10.500l-5.250 7.700z" fill="#5b8cc8"/>
<g filter="url(#ds)">
<path d="M1678.2 14.6V6.1h8.5M1697.5 6.1h8.5v8.5M1706 25.200000000000003v8.5h-8.5M1686.7 33.7h-8.5v-8.5" fill="none" stroke="#7aa9dd" stroke-width="1.600"/>
<circle cx="1689.5" cy="13.6" r="4.900" fill="url(#rgs)"/>
<circle cx="1698.5" cy="19.2" r="4.900" fill="url(#rgs)"/>
<circle cx="1689.5" cy="26" r="4.900" fill="url(#rgs)"/>
<path d="M1714.9 14.6V6.1h8.5M1734.6 6.1h8.5v8.5M1743.1 25.200000000000003v8.5h-8.5M1723.4 33.7h-8.5v-8.5" fill="none" stroke="#7aa9dd" stroke-width="1.600"/>
<path d="M1725.200 16l8.400 8.400M1733.600 16l-8.400 8.400" stroke="#141b27" stroke-width="6" stroke-linecap="round"/><path d="M1725.200 16l8.400 8.400M1733.600 16l-8.400 8.400" stroke="#fff" stroke-width="4" stroke-linecap="round"/>
<line x1="1773.500" y1="24.500" x2="1779.600" y2="30.200" stroke="#e4e9ef" stroke-width="3" stroke-linecap="round"/><circle cx="1768.400" cy="18.800" r="8" fill="#a6c8ee" stroke="#e9edf2" stroke-width="1.600"/>
<path d="M1801.2 15.7V10.2h5.5M1815.1 10.2h5.5v5.5M1820.6 24.1v5.5h-5.5M1806.7 29.6h-5.5v-5.5" fill="none" stroke="#dfe7f0" stroke-width="1.200"/>
<circle cx="1808" cy="16.6" r="3.600" fill="url(#rgs)"/>
<circle cx="1814.5" cy="16.2" r="3.600" fill="url(#rgs)"/>
<circle cx="1806.5" cy="22.6" r="3.600" fill="url(#rgs)"/>
<circle cx="1812" cy="21.4" r="3.600" fill="url(#rgs)"/>
<path d="M1811.4 25.4H1821.4M1816.4 20.4V30.4" stroke="#1b2433" stroke-width="5.0" stroke-linecap="round"/><path d="M1811.4 25.4H1821.4M1816.4 20.4V30.4" stroke="#fff" stroke-width="3.2" stroke-linecap="round"/>
<path d="M1872.700 9.800h11.500l5.400 5.400V31h-16.900z" fill="#a9cbee"/><path d="M1884.200 9.800v5.400h5.400z" fill="#dbe9f8"/>
<path d="M1876.4 22H1885.6M1881 17.4V26.6" stroke="#1b2433" stroke-width="4.8" stroke-linecap="round"/><path d="M1876.4 22H1885.6M1881 17.4V26.6" stroke="#fff" stroke-width="3" stroke-linecap="round"/>
</g>
<text transform="translate(1502.600,25.200) scale(.915,1)" font-size="13.300" fill="#14081f">Atoms and bonds</text><rect x="14.800" y="48.800" width="32.400" height="32.300" fill="#3c3cf4"/>
<path d="M47 49.300L28.500 63.500 33 79.500 23.500 70.500 15.500 79 17.800 68.500 15 62.500 15.500 52.500 22.500 60.500z" fill="#2ec4f2"/>
<path d="M45.500 50.500L26 63.500 28 72 22.500 68 17 74 18.500 67 15.500 60 17 56 22.500 62z" fill="#38e6c8" opacity=".85"/>
<path d="M40 54.500L24 65 22 69.500 18 71.500 17 66 16 62 20 64z" fill="#a8ec40"/>
<path d="M30 60.500L22.500 65.500 20 69 17.200 69.500 16.800 64.500 19.500 65z" fill="#f4dc20"/>
<path d="M22 64.500l-2.500 3.500-2.200 .8-.3-3.300z" fill="#f2601c"/><path d="M36 57.200L21 66.500" stroke="#f28a1c" stroke-width=".7"/>
<text transform="translate(52,74.100) scale(.96,1)" font-size="24.500" fill="#fff" >SA</text>
<rect x="89" y="48.800" width="32.200" height="32.300" fill="url(#lgm)"/>
<path d="M103.5 60L108.5 57L112.5 61L111.5 67L106.5 70L102.5 66z" fill="none" stroke="#555" stroke-width="1.300"/><path d="M102.500 66L98 70 95 73M95 73l-3.500 1M95 73l3 3.600M95 73l-1-4" stroke="#666" stroke-width="1.100"/><circle cx="104.8" cy="56.8" r="1.3" fill="#2c2"/><circle cx="110.5" cy="56" r="1.3" fill="#2c2"/><circle cx="113.5" cy="62.5" r="1.3" fill="#2c2"/><circle cx="110" cy="70" r="1.3" fill="#d22"/><circle cx="100.6" cy="67.8" r="1.3" fill="#2c2"/><circle cx="99" cy="58.8" r="1.3" fill="#d22"/><circle cx="103" cy="53.5" r="1" fill="#eee"/><circle cx="116" cy="55" r="1.3" fill="#d22"/><circle cx="117.5" cy="64.5" r="1" fill="#eee"/><circle cx="116.5" cy="62" r="1.2" fill="#d22"/><circle cx="107.5" cy="71.5" r="1" fill="#eee"/><circle cx="98.8" cy="70.6" r="1.2" fill="#d22"/><circle cx="95" cy="73" r="1.4" fill="#e89020"/><circle cx="91.4" cy="74.2" r="1.2" fill="#d22"/><circle cx="98.2" cy="76.8" r="1.2" fill="#d22"/><circle cx="93.8" cy="68.8" r="1.2" fill="#d22"/><circle cx="118" cy="53" r="0.9" fill="#eee"/>
<path d="M134.200 51.600h15.600l7.200 13.200-7.200 13.200h-15.600l-7.200-13.200z" fill="#2d5f8f"/><path d="M136 55h12l5.200 9.800-5.200 9.800h-12l-5.200-9.800z" fill="#fff"/><path d="M139.100 60.700h15v3.400h-15zM130 67.300h16.600v3.400h-16.600z" fill="#2d5f8f"/>
<g transform="translate(179.200,64.600)"><g transform="rotate(0)"><path d="M0 0V-13.200" stroke="#fff" stroke-width="3.800" stroke-linecap="round"/><path d="M0 -6.500l-4.200-3.400M0 -6.500l4.200-3.400" stroke="#fff" stroke-width="3.200" stroke-linecap="round"/><path d="M0 -11l-2.600-2.200M0 -11l2.600-2.200" stroke="#fff" stroke-width="2.400" stroke-linecap="round"/></g><g transform="rotate(60)"><path d="M0 0V-13.200" stroke="#fff" stroke-width="3.800" stroke-linecap="round"/><path d="M0 -6.500l-4.200-3.400M0 -6.500l4.200-3.400" stroke="#fff" stroke-width="3.200" stroke-linecap="round"/><path d="M0 -11l-2.600-2.200M0 -11l2.600-2.200" stroke="#fff" stroke-width="2.400" stroke-linecap="round"/></g><g transform="rotate(120)"><path d="M0 0V-13.200" stroke="#fff" stroke-width="3.800" stroke-linecap="round"/><path d="M0 -6.500l-4.200-3.400M0 -6.500l4.200-3.400" stroke="#fff" stroke-width="3.200" stroke-linecap="round"/><path d="M0 -11l-2.600-2.200M0 -11l2.600-2.200" stroke="#fff" stroke-width="2.400" stroke-linecap="round"/></g><g transform="rotate(180)"><path d="M0 0V-13.200" stroke="#fff" stroke-width="3.800" stroke-linecap="round"/><path d="M0 -6.500l-4.200-3.400M0 -6.500l4.200-3.400" stroke="#fff" stroke-width="3.200" stroke-linecap="round"/><path d="M0 -11l-2.600-2.200M0 -11l2.600-2.200" stroke="#fff" stroke-width="2.400" stroke-linecap="round"/></g><g transform="rotate(240)"><path d="M0 0V-13.200" stroke="#fff" stroke-width="3.800" stroke-linecap="round"/><path d="M0 -6.500l-4.200-3.400M0 -6.500l4.200-3.400" stroke="#fff" stroke-width="3.200" stroke-linecap="round"/><path d="M0 -11l-2.600-2.200M0 -11l2.600-2.200" stroke="#fff" stroke-width="2.400" stroke-linecap="round"/></g><g transform="rotate(300)"><path d="M0 0V-13.200" stroke="#fff" stroke-width="3.800" stroke-linecap="round"/><path d="M0 -6.500l-4.200-3.400M0 -6.500l4.200-3.400" stroke="#fff" stroke-width="3.200" stroke-linecap="round"/><path d="M0 -11l-2.600-2.200M0 -11l2.600-2.200" stroke="#fff" stroke-width="2.400" stroke-linecap="round"/></g><circle r="4.400" fill="#fff"/><circle r="1.600" fill="#2f3f55"/></g>
<rect x="199.800" y="48.800" width="32.400" height="32.300" fill="#fff"/><text transform="translate(200.800,68.700) scale(1.560,1)" font-size="9.400" font-weight="bold" fill="#8fb0d0">PDB</text>
<rect x="236.900" y="60" width="32" height="10.700" fill="#22345f"/><text transform="translate(239.400,68.800) scale(.8,1)" font-size="8.800" font-weight="bold" font-style="italic" fill="#fff">MMTF</text><rect x="259.500" y="62.400" width="6.400" height="6" fill="#dfe5ee"/><path d="M260.500 64h4.500M260.500 66h4.500" stroke="#22345f" stroke-width=".8"/>
<rect x="273.900" y="48.800" width="32.200" height="32.300" fill="#8aa6d0"/>
<circle cx="290" cy="66.5" r="12.600" fill="#d3dff0"/><path d="M290.0 62.9L293.4 65.4M290.0 62.9L290.0 58.9M293.4 65.4L292.1 69.4M293.4 65.4L297.2 64.2M292.1 69.4L287.9 69.4M292.1 69.4L294.5 72.6M287.9 69.4L286.6 65.4M287.9 69.4L285.5 72.6M286.6 65.4L290.0 62.9M286.6 65.4L282.8 64.2M290.0 58.9L293.3 56.4M294.5 60.4L293.3 56.4M293.3 56.4L295.1 55.0M294.5 60.4L298.6 60.3M297.2 64.2L298.6 60.3M298.6 60.3L299.4 58.1M297.2 64.2L300.6 66.5M297.2 68.8L300.6 66.5M300.6 66.5L302.5 67.8M297.2 68.8L298.6 72.7M294.5 72.6L298.6 72.7M298.6 72.7L300.9 72.8M294.5 72.6L293.3 76.6M290.0 74.1L293.3 76.6M293.3 76.6L292.6 78.8M290.0 74.1L286.7 76.6M285.5 72.6L286.7 76.6M286.7 76.6L287.4 78.8M285.5 72.6L281.4 72.7M282.8 68.8L281.4 72.7M281.4 72.7L279.1 72.8M282.8 68.8L279.4 66.5M282.8 64.2L279.4 66.5M279.4 66.5L277.5 67.8M282.8 64.2L281.4 60.3M285.5 60.4L281.4 60.3M281.4 60.3L280.6 58.1M285.5 60.4L286.7 56.4M290.0 58.9L286.7 56.4M286.7 56.4L284.9 55.0M290.0 53.9L295.1 55.0M295.1 55.0L299.4 58.1M299.4 58.1L302.0 62.6M302.0 62.6L302.5 67.8M302.5 67.8L300.9 72.8M300.9 72.8L297.4 76.7M297.4 76.7L292.6 78.8M292.6 78.8L287.4 78.8M287.4 78.8L282.6 76.7M282.6 76.7L279.1 72.8M279.1 72.8L277.5 67.8M277.5 67.8L278.0 62.6M278.0 62.6L280.6 58.1M280.6 58.1L284.9 55.0M284.9 55.0L290.0 53.9" stroke="#2a2a2a" stroke-width=".7" fill="none"/><circle cx="290.0" cy="62.9" r=".95" fill="#111"/><circle cx="293.4" cy="65.4" r=".95" fill="#111"/><circle cx="292.1" cy="69.4" r=".95" fill="#111"/><circle cx="287.9" cy="69.4" r=".95" fill="#111"/><circle cx="286.6" cy="65.4" r=".95" fill="#111"/><circle cx="290.0" cy="58.9" r=".95" fill="#111"/><circle cx="294.5" cy="60.4" r=".95" fill="#111"/><circle cx="297.2" cy="64.2" r=".95" fill="#111"/><circle cx="297.2" cy="68.8" r=".95" fill="#111"/><circle cx="294.5" cy="72.6" r=".95" fill="#111"/><circle cx="290.0" cy="74.1" r=".95" fill="#111"/><circle cx="285.5" cy="72.6" r=".95" fill="#111"/><circle cx="282.8" cy="68.8" r=".95" fill="#111"/><circle cx="282.8" cy="64.2" r=".95" fill="#111"/><circle cx="285.5" cy="60.4" r=".95" fill="#111"/><circle cx="293.3" cy="56.4" r=".95" fill="#111"/><circle cx="298.6" cy="60.3" r=".95" fill="#111"/><circle cx="300.6" cy="66.5" r=".95" fill="#111"/><circle cx="298.6" cy="72.7" r=".95" fill="#111"/><circle cx="293.3" cy="76.6" r=".95" fill="#111"/><circle cx="286.7" cy="76.6" r=".95" fill="#111"/><circle cx="281.4" cy="72.7" r=".95" fill="#111"/><circle cx="279.4" cy="66.5" r=".95" fill="#111"/><circle cx="281.4" cy="60.3" r=".95" fill="#111"/><circle cx="286.7" cy="56.4" r=".95" fill="#111"/><circle cx="290.0" cy="53.9" r=".95" fill="#111"/><circle cx="295.1" cy="55.0" r=".95" fill="#111"/><circle cx="299.4" cy="58.1" r=".95" fill="#111"/><circle cx="302.0" cy="62.6" r=".95" fill="#111"/><circle cx="302.5" cy="67.8" r=".95" fill="#111"/><circle cx="300.9" cy="72.8" r=".95" fill="#111"/><circle cx="297.4" cy="76.7" r=".95" fill="#111"/><circle cx="292.6" cy="78.8" r=".95" fill="#111"/><circle cx="287.4" cy="78.8" r=".95" fill="#111"/><circle cx="282.6" cy="76.7" r=".95" fill="#111"/><circle cx="279.1" cy="72.8" r=".95" fill="#111"/><circle cx="277.5" cy="67.8" r=".95" fill="#111"/><circle cx="278.0" cy="62.6" r=".95" fill="#111"/><circle cx="280.6" cy="58.1" r=".95" fill="#111"/><circle cx="284.9" cy="55.0" r=".95" fill="#111"/><path d="M283.500 56.500l3.500-4.800M296.500 56.500l-3.500-4.800" stroke="#2a2a2a" stroke-width=".8"/><circle cx="287" cy="51.600" r="1.100" fill="#111"/><circle cx="293" cy="51.600" r="1.100" fill="#111"/><ellipse cx="285.400" cy="65.500" rx="2.200" ry="1.600" fill="#8fb0dc" opacity=".8"/><ellipse cx="294.600" cy="65.500" rx="2.200" ry="1.600" fill="#8fb0dc" opacity=".8"/>
<path transform="translate(306,50)" d="M12.900 .1C16 1.500 21.500 5.500 24.200 10.500L27.800 13.400 26.300 15C26.600 20 24.500 26 21.500 29.900C20.300 26 19.600 21.500 19.200 18.200L17.500 17.500 11.100 16.800 12.500 15.300 18 13C17.600 9 16 4.500 12.900 .1z" fill="#d6d8da"/><path transform="translate(306,50)" d="M15 2.500C18.500 5.500 21 9 22.500 12.500L19.500 13.500C19 9 17.500 5.500 15 2.500z" fill="#bfc2c6"/><circle cx="320.8" cy="66.200" r=".9" fill="#d8cc80"/>
<path transform="translate(343,50)" d="M12.900 .1C16 1.500 21.500 5.500 24.200 10.500L27.800 13.400 26.300 15C26.600 20 24.500 26 21.500 29.900C20.300 26 19.600 21.500 19.200 18.200L17.500 17.500 11.100 16.800 12.500 15.300 18 13C17.600 9 16 4.500 12.900 .1z" fill="#d6d8da"/><path transform="translate(343,50)" d="M15 2.500C18.500 5.500 21 9 22.500 12.500L19.500 13.500C19 9 17.500 5.500 15 2.500z" fill="#bfc2c6"/><circle cx="357.8" cy="66.200" r=".9" fill="#d8cc80"/>
<path d="M391.0 49.600h16l8.600 8.600v22.300h-24.600z" fill="#fff" stroke="#3c7ab0" stroke-width="1.100"/><path d="M407.0 49.600v8.600h8.600" fill="none" stroke="#3c7ab0" stroke-width="1"/><rect x="385.9" y="62.800" width="25" height="10.600" rx="1.600" fill="#fff" stroke="#3c7ab0" stroke-width="1"/><text transform="translate(391.59999999999997,71) scale(1,1)" font-size="6.200" fill="#6a9cc8">UUID</text>
<path d="M428.0 49.600h16l8.600 8.600v22.300h-24.600z" fill="#fff" stroke="#3c7ab0" stroke-width="1.100"/><path d="M444.0 49.600v8.600h8.600" fill="none" stroke="#3c7ab0" stroke-width="1"/><rect x="422.9" y="62.800" width="25" height="10.600" rx="1.600" fill="#fff" stroke="#3c7ab0" stroke-width="1"/><text transform="translate(425.2,71) scale(0.86,1)" font-size="6.200" fill="#6a9cc8">Element</text>
<rect x="459" y="48.800" width="32.100" height="32.300" fill="#6a6a6a"/>
<defs><filter id="bl"><feGaussianBlur stdDeviation="1.200"/></filter><clipPath id="ct"><rect x="459" y="48.800" width="32.100" height="32.300"/></clipPath></defs><g clip-path="url(#ct)"><g filter="url(#bl)"><circle cx="462" cy="53" r="3.5" fill="#0a0a0a"/><circle cx="470" cy="51" r="2.8" fill="#0a0a0a"/><circle cx="483" cy="53" r="3.5" fill="#0a0a0a"/><circle cx="489" cy="60" r="3" fill="#0a0a0a"/><circle cx="466" cy="62" r="3" fill="#0a0a0a"/><circle cx="476" cy="58" r="3.6" fill="#0a0a0a"/><circle cx="461" cy="71" r="3" fill="#0a0a0a"/><circle cx="470" cy="73" r="3.2" fill="#0a0a0a"/><circle cx="480" cy="68" r="3.4" fill="#0a0a0a"/><circle cx="488" cy="73" r="3" fill="#0a0a0a"/><circle cx="465" cy="80" r="3" fill="#0a0a0a"/><circle cx="475" cy="80" r="2.8" fill="#0a0a0a"/><circle cx="485" cy="80" r="3.2" fill="#0a0a0a"/><circle cx="490" cy="66" r="2" fill="#0a0a0a"/><circle cx="473" cy="65" r="2.200" fill="#f5f5f5"/><circle cx="482" cy="60" r="2" fill="#9a9a9a"/><circle cx="466" cy="56" r="1.800" fill="#8a8a8a"/></g></g>
<path d="M504.8 51.500L506.6 77.500" stroke="#5a87bd" stroke-width="3.200" fill="none"/><path d="M513.4 51.500L515.2 77.500" stroke="#5a87bd" stroke-width="3.200" fill="none"/><path d="M522.0 51.500L523.8000000000001 77.500" stroke="#5a87bd" stroke-width="3.200" fill="none"/><path d="M503.4 52L497.8 78" stroke="#7fb1ea" stroke-width="2.800" fill="none"/><path d="M512.0 52L506.40000000000003 78" stroke="#7fb1ea" stroke-width="2.800" fill="none"/><path d="M520.6 52L515.0 78" stroke="#7fb1ea" stroke-width="2.800" fill="none"/><path d="M529.1999999999999 52L523.5999999999999 78" stroke="#7fb1ea" stroke-width="2.800" fill="none"/>
<path d="M541.5 51.500L543.3000000000001 77.500" stroke="#5a87bd" stroke-width="3.200" fill="none"/><path d="M550.1 51.500L551.9000000000001 77.500" stroke="#5a87bd" stroke-width="3.200" fill="none"/><path d="M558.7 51.500L560.5000000000001 77.500" stroke="#5a87bd" stroke-width="3.200" fill="none"/><path d="M540.1 52L534.5 78" stroke="#7fb1ea" stroke-width="2.800" fill="none"/><path d="M548.7 52L543.1 78" stroke="#7fb1ea" stroke-width="2.800" fill="none"/><path d="M557.3000000000001 52L551.7 78" stroke="#7fb1ea" stroke-width="2.800" fill="none"/><path d="M565.9 52L560.3 78" stroke="#7fb1ea" stroke-width="2.800" fill="none"/>
<defs><clipPath id="cm"><circle cx="585.700" cy="65.200" r="13.600"/></clipPath></defs><circle cx="585.700" cy="65.200" r="13.400" fill="none" stroke="#8fbbe8" stroke-width="2.200"/><path clip-path="url(#cm)" d="M571 79l7.500-11 2.500 2.200 5-11.200 3 5 1.800-2.200 10.200 17.200z" fill="url(#lgl)"/>
<path d="M608.900 48.800h28.400v27.600l-14.200 5.300-14.200-5.300z" fill="#fff"/><rect x="610.800" y="50.600" width="24.600" height="10.200" rx="1.500" fill="#dcdcdc"/><text transform="translate(611.400,58.800) scale(.8,1)" font-size="6.600" fill="#5d8fc0">ELEMENT</text>
<path d="M623.100 59v5" stroke="#000" stroke-width="1.800"/><path d="M620 62.800h6.200l-3.100 3.400z" fill="#000"/><path d="M614.600 68.800l8.500-3 8.500 3v7.600l-8.500 3.400-8.500-3.400zM614.600 68.800l8.500 3.400 8.500-3.400M623.100 72.200v7.600" fill="none" stroke="#000" stroke-width="1.400"/>
<rect x="644" y="48.800" width="32.200" height="32.300" fill="#fff"/><defs><clipPath id="cy"><rect x="644" y="48.800" width="32.200" height="32.300"/></clipPath></defs><g clip-path="url(#cy)"><path d="M644 48.800h9c2 3 5 3 5 6s-5 3-7 8 4 6 3 10-6 3-6 8h-4z" fill="#fbdc8a"/><path d="M646 52c3-2 7 0 6 3s-5 3-6 1z" fill="#f7b928"/><path d="M649 64c3 1 6 5 5 7s-5-1-6-4z" fill="#f7b928"/><path d="M664 49c4 2 8 0 12 3v8c-3 1-5-2-8-3s-5-4-4-8z" fill="#fde9b4"/><path d="M665 60c3 0 7 4 8 8s-2 3-4 1-5-6-4-9z" fill="#fbd06a"/><path d="M668 63c2 1 4 3 4 5s-3 0-4-2z" fill="#f7b928"/><path d="M663 76c4-2 9-1 13 1v4h-13z" fill="#fbdc8a"/><path d="M655 72c2 1 3 5 2 9h-5c0-4 1-8 3-9z" fill="#fde9b4"/></g>
<rect x="681" y="48.800" width="32.200" height="32.300" fill="#fff"/><g font-family="DejaVu Sans, sans-serif" font-style="italic"><text x="682" y="59.600" font-size="9.600" fill="#2d6a98">Path</text><text x="691.500" y="68.800" font-size="9.600" fill="#e8202a" font-weight="bold">to</text><text x="687.500" y="79.400" font-size="9.600" fill="#2d6a98">Conf</text></g>
<g font-weight="bold" font-size="11.200" fill="#a8ccf5"><text x="722.200" y="61.600">SMI</text><text x="722.200" y="75.200">LES</text></g>
<text x="756" y="78.800" font-size="34" fill="#fff" stroke="#2f3f55" stroke-width=".45">S</text><text x="775.400" y="60" font-size="12.500" fill="#fff">2</text>
<rect x="793.900" y="50.100" width="29.400" height="30" fill="none" stroke="#b4b4ae" stroke-width="1.400"/><text x="798.600" y="73.300" font-family="Liberation Serif, serif" font-size="21.500" fill="#f0ead8">Sd</text>
<path d="M829.800 56.200l4.800-4.600 10.600 4.200 10.600-4.200 4.800 4.600v17.600l-15.400 4.600-15.400-4.600z" fill="#7d0000"/><path d="M831.500 55l3.200-2.600 6.800 2.800-2 2zM858.800 55l-3.200-2.600-6.800 2.800 2 2z" fill="#e8c8c8" opacity=".8"/><path d="M849.500 72.500l5-1.600v2.400l-5 1.600z" fill="#e8c8c8" opacity=".8"/>
<g filter="url(#ds)"><path d="M973.9 62.500h28.100v3.200l-.6 5.200q-.2 1.700-1.900 1.900h-7.800q-1.700-.2-1.900-1.900l-.5-4.700h-2.700l-.5 4.700q-.2 1.700-1.900 1.900h-7.800q-1.700-.2-1.900-1.900l-.6-5.200z" fill="#a9cbee"/><path d="M976.1 64.500h8.400l-.4 5.400q-.1.800-.9.800h-5.800q-.8 0-.9-.8z" fill="#4f6076"/><path d="M991.4 64.500h8.400l-.4 5.400q-.1.800-.9.800h-5.800q-.8 0-.9-.8z" fill="#4f6076"/></g>
<g filter="url(#ds)"><path d="M1010.8 62.500h28.100v3.200l-.6 5.200q-.2 1.700-1.900 1.900h-7.800q-1.700-.2-1.900-1.900l-.5-4.700h-2.700l-.5 4.700q-.2 1.700-1.900 1.900h-7.800q-1.700-.2-1.900-1.900l-.6-5.200z" fill="#a9cbee"/><path d="M1013.0 64.500h8.400l-.4 5.400q-.1.800-.9.800h-5.800q-.8 0-.9-.8z" fill="#7f9cc0"/><path d="M1028.3 64.500h8.400l-.4 5.400q-.1.800-.9.800h-5.800q-.8 0-.9-.8z" fill="#2a3648"/></g>
<g filter="url(#ds)"><path d="M1047.5 62.500h28.100v3.200l-.6 5.200q-.2 1.700-1.900 1.900h-7.800q-1.700-.2-1.900-1.900l-.5-4.700h-2.700l-.5 4.700q-.2 1.700-1.900 1.900h-7.800q-1.700-.2-1.900-1.900l-.6-5.200z" fill="#a9cbee"/><path d="M1049.7 64.500h8.400l-.4 5.400q-.1.800-.9.800h-5.800q-.8 0-.9-.8z" fill="#4f6076"/><path d="M1065.0 64.500h8.400l-.4 5.400q-.1.800-.9.800h-5.800q-.8 0-.9-.8z" fill="#4f6076"/></g>
<g filter="url(#ds)"><path d="M1084.4 62.500h28.100v3.200l-.6 5.200q-.2 1.700-1.900 1.900h-7.800q-1.700-.2-1.900-1.900l-.5-4.700h-2.700l-.5 4.700q-.2 1.700-1.900 1.900h-7.800q-1.700-.2-1.900-1.900l-.6-5.200z" fill="#a9cbee"/><path d="M1086.6000000000001 64.500h8.400l-.4 5.400q-.1.800-.9.800h-5.800q-.8 0-.9-.8z" fill="#4f6076"/><path d="M1101.9 64.500h8.400l-.4 5.400q-.1.800-.9.800h-5.800q-.8 0-.9-.8z" fill="#4f6076"/></g>
<g filter="url(#ds)"><path d="M984.400 52.400l7.200 6.800M991.600 52.400l-7.200 6.800" stroke="#fff" stroke-width="3.300" stroke-linecap="round"/>
<circle cx="1058" cy="55.400" r=".9" fill="#fff"/><path d="M1060 52.800q1.800 2.600 0 5.200M1062.600 50.600q3.200 4.800 0 9.600" fill="none" stroke="#fff" stroke-width="1.300" stroke-linecap="round"/>
<path d="M1091.500 57.200q7-8.600 14.200 0" fill="none" stroke="#fff" stroke-width="1.500"/><path d="M1088.800 55.200l1.200 5 3.800-3.200zM1108.400 55.200l-1.200 5-3.800-3.200z" fill="#fff"/></g>
<g filter="url(#ds)"><path d="M1168.800 58v15.500q0 2.500 2.500 2.500h8M1168.800 64.800h10.500" fill="none" stroke="#a9cbee" stroke-width="1.900"/><path d="M1165 50h5l2.200 2.200V59.200h-7.200z" fill="#dbe9f8"/><path d="M1177.600 64.800l5.600-3.400 5.600 3.400-5.600 3.400zM1177.600 75.400l5.600-3.400 5.600 3.400-5.600 3.400z" fill="url(#lgl)"/>
<path d="M1210.200 56.3H1225.200" stroke="#eef4fb" stroke-width="2.800" stroke-linecap="round"/>
<path d="M1248 56.3H1256.600" stroke="#eef4fb" stroke-width="2.800" stroke-linecap="round"/>
<path d="M1210.200 62.3H1225.200" stroke="#d6e6f7" stroke-width="2.800" stroke-linecap="round"/>
<path d="M1248 62.3H1256.600" stroke="#d6e6f7" stroke-width="2.800" stroke-linecap="round"/>
<path d="M1210.200 68.2H1225.200" stroke="#bcd7f2" stroke-width="2.800" stroke-linecap="round"/>
<path d="M1248 68.2H1256.600" stroke="#bcd7f2" stroke-width="2.800" stroke-linecap="round"/>
<path d="M1210.200 74.1H1225.200" stroke="#a3c8ee" stroke-width="2.800" stroke-linecap="round"/>
<path d="M1248 74.1H1256.600" stroke="#a3c8ee" stroke-width="2.800" stroke-linecap="round"/>
<path d="M1261.600 55.200l5.800.4-2.200 2.400q7.400 6.600 5.400 13.400-1.600 4.200-8.400 4.400 5-1.600 5.200-6.200.2-4.800-4.600-8.800l-2.200 2.400z" fill="url(#lgl)"/>
<circle cx="1313.500" cy="64.400" r="9.400" fill="url(#rgs)" stroke="#1c2635" stroke-width=".6"/><path d="M1309.400 58.600l9.800 5.800-9.800 5.800z" fill="#6cc03c" stroke="#3d8a1c" stroke-width=".8"/>
<circle cx="1351.100" cy="64.400" r="9.400" fill="url(#rgs)" stroke="#1c2635" stroke-width=".6"/><rect x="1346.600" y="59.900" width="9" height="9" rx="1" fill="#d84545" stroke="#a02a2a" stroke-width=".8"/></g></svg>
<!-- LEFT WINDOW -->
<div class="win" id="lw" style="left:53px;top:194px;width:601.5px;height:831.5px;background:linear-gradient(#34455a,#3b4c63);border-top:1px solid #8696ab;border-left:1px solid #6f8199;border-right:1px solid #4d6486">
 <div class="title" style="background:#2b3a4e;height:30px"></div>
</div>
<div class="abs" style="left:58.6px;top:198.3px;width:26px;font:10.5px/11.8px 'Liberation Sans',sans-serif;color:#c2d6ee;letter-spacing:.5px;-webkit-text-stroke:.35px #c2d6ee">SMI<br>LES</div>
<span style="position:absolute;left:94.4px;top:204.00px;font:bold 13.0px/1 'Liberation Sans',sans-serif;color:#fff;white-space:pre;transform:scaleX(0.8901);transform-origin:0 0;">RDKit - SMILES Manager</span>
<!-- lock + close -->
<svg class="abs" style="left:614px;top:201px" width="14" height="16" viewBox="0 0 14 16"><path d="M3.2 7V4.8a3.6 3.6 0 0 1 7.2 0V7" fill="none" stroke="#5b84b5" stroke-width="1.8"/><rect x="1" y="6.6" width="11.6" height="8.6" rx="1" fill="#5b84b5"/><rect x="6.1" y="9" width="1.5" height="3.6" fill="#2b3a4e"/></svg>
<svg class="abs" style="left:634px;top:201px" width="16" height="16" viewBox="0 0 16 16"><path d="M2.2 2.2L13.8 13.8M13.8 2.2L2.2 13.8" stroke="#6690c0" stroke-width="3.6" stroke-linecap="butt"/></svg>
<span style="position:absolute;left:64.0px;top:246.20px;font:normal 13.0px/1 'Liberation Sans',sans-serif;color:#fff;white-space:pre;transform:scaleX(0.9228);transform-origin:0 0;">Zoom:</span>
<div class="btn" style="left:575px;top:237px;width:30px;height:30px"></div>
<div class="btn" style="left:612px;top:237px;width:30px;height:30px"></div>
<svg class="abs" style="left:575px;top:237px" width="30" height="30" viewBox="0 0 30 30"><line x1="17.5" y1="18" x2="23.5" y2="24" stroke="#dfe6ee" stroke-width="2.6" stroke-linecap="round"/><circle cx="13.6" cy="13.8" r="6" fill="#9dc0e6" stroke="#e3e9f0" stroke-width="1.6"/><path d="M10.2 13.8h6.8M13.6 10.4v6.8" stroke="#fff" stroke-width="1.8"/></svg>
<svg class="abs" style="left:612px;top:237px" width="30" height="30" viewBox="0 0 30 30"><line x1="17.5" y1="18" x2="23.5" y2="24" stroke="#dfe6ee" stroke-width="2.6" stroke-linecap="round"/><circle cx="13.6" cy="13.8" r="6" fill="#9dc0e6" stroke="#e3e9f0" stroke-width="1.6"/><path d="M10.2 13.8h6.8" stroke="#fff" stroke-width="1.8"/></svg>
<!-- canvas -->
<div class="abs" style="left:64px;top:274px;width:578px;height:667px;background:linear-gradient(#eef0f3,#f4f7fc);border:1px solid #1c2736"></div>
<div class="abs" style="left:92.6px;top:873px;font:italic 15.2px/18px 'Liberation Sans',sans-serif;color:#1a1a1a;white-space:nowrap">2 - COc1cc(ccc1O)CNC(CCCCC=CC(C)C)C(F)(F)F</div>
<span style="position:absolute;left:64.0px;top:957.60px;font:normal 13.0px/1 'Liberation Sans',sans-serif;color:#fff;white-space:pre;transform:scaleX(0.9224);transform-origin:0 0;">Navigation:</span>
<div class="btn" style="left:575px;top:948px;width:30px;height:30px"></div>
<div class="btn" style="left:612px;top:948px;width:30px;height:30px"></div>
<svg class="abs" style="left:575px;top:948px" width="30" height="30" viewBox="0 0 30 30"><path d="M14.5 6.5L7.5 15l7 8.5M22.5 6.5L15.5 15l7 8.5" fill="none" stroke="#dbe6f3" stroke-width="2.2"/></svg>
<svg class="abs" style="left:612px;top:948px" width="30" height="30" viewBox="0 0 30 30"><path d="M7.5 6.5L14.5 15l-7 8.5M15.5 6.5L22.5 15l-7 8.5" fill="none" stroke="#dbe6f3" stroke-width="2.2"/></svg>
<div class="btn" style="left:64px;top:985px;width:286px;height:30px;"></div><span style="position:absolute;left:188.0px;top:993.30px;font:normal 13.0px/1 'Liberation Sans',sans-serif;color:#fff;white-space:pre;transform:scaleX(0.8152);transform-origin:0 0;">Save as</span>
<div class="btn" style="left:357px;top:985px;width:285px;height:30px;"></div><span style="position:absolute;left:442.3px;top:993.30px;font:normal 13.0px/1 'Liberation Sans',sans-serif;color:#fff;white-space:pre;transform:scaleX(0.8863);transform-origin:0 0;">Generate 3D structure</span>
<svg class="abs" style="left:0;top:0" width="1916" height="1116" viewBox="0 0 1916 1116"><line x1="466.3" y1="534.7" x2="443.8" y2="573.8" stroke="#ef8186" stroke-width="15.5" stroke-linecap="butt"/>
<line x1="443.8" y1="573.8" x2="398.4" y2="573.8" stroke="#ef8186" stroke-width="15.5" stroke-linecap="butt"/>
<line x1="398.4" y1="573.8" x2="376.0" y2="613.5" stroke="#ef8186" stroke-width="15.5" stroke-linecap="butt"/>
<line x1="376.0" y1="613.5" x2="330.3" y2="613.5" stroke="#ef8186" stroke-width="15.5" stroke-linecap="butt"/>
<line x1="376.0" y1="613.5" x2="398.5" y2="652.9" stroke="#ef8186" stroke-width="15.5" stroke-linecap="butt"/>
<line x1="398.5" y1="652.9" x2="437.6" y2="630.3" stroke="#ef8186" stroke-width="15.5" stroke-linecap="butt"/>
<line x1="398.5" y1="652.9" x2="359.0" y2="675.6" stroke="#ef8186" stroke-width="15.5" stroke-linecap="butt"/>
<line x1="398.5" y1="652.9" x2="421.0" y2="692.2" stroke="#ef8186" stroke-width="15.5" stroke-linecap="butt"/>
<circle cx="466.3" cy="534.7" r="12.2" fill="#ef8186"/>
<circle cx="443.8" cy="573.8" r="12.2" fill="#ef8186"/>
<circle cx="398.4" cy="573.8" r="12.2" fill="#ef8186"/>
<circle cx="376.0" cy="613.5" r="12.2" fill="#ef8186"/>
<circle cx="330.3" cy="613.5" r="12.2" fill="#ef8186"/>
<circle cx="398.5" cy="652.9" r="12.2" fill="#ef8186"/>
<circle cx="437.6" cy="630.3" r="12.2" fill="#ef8186"/>
<circle cx="359.0" cy="675.6" r="12.2" fill="#ef8186"/>
<circle cx="421.0" cy="692.2" r="12.2" fill="#ef8186"/>
<g stroke-linecap="butt">
<line x1="103.3" y1="692.5" x2="125.6" y2="731.7" stroke="#000" stroke-width="2.0" />
<line x1="103.3" y1="770.9" x2="125.6" y2="731.7" stroke="#000" stroke-width="2.0" />
<line x1="125.6" y1="731.7" x2="171.0" y2="731.7" stroke="#000" stroke-width="2.0" />
<line x1="171.0" y1="731.7" x2="193.8" y2="692.5" stroke="#000" stroke-width="2.0" />
<line x1="193.8" y1="692.5" x2="239.0" y2="692.5" stroke="#000" stroke-width="2.0" />
<line x1="239.0" y1="692.5" x2="262.0" y2="653.1" stroke="#000" stroke-width="2.0" />
<line x1="262.0" y1="653.1" x2="307.4" y2="653.1" stroke="#000" stroke-width="2.0" />
<line x1="307.4" y1="653.1" x2="330.3" y2="613.5" stroke="#000" stroke-width="2.0" />
<line x1="330.3" y1="613.5" x2="376.0" y2="613.5" stroke="#000" stroke-width="2.0" />
<line x1="443.8" y1="573.8" x2="466.3" y2="534.7" stroke="#000" stroke-width="2.0" />
<line x1="466.3" y1="534.7" x2="511.9" y2="534.7" stroke="#000" stroke-width="2.0" />
<line x1="511.9" y1="534.7" x2="534.7" y2="495.2" stroke="#000" stroke-width="2.0" />
<line x1="534.7" y1="495.2" x2="512.1" y2="455.7" stroke="#000" stroke-width="2.0" />
<line x1="512.1" y1="455.7" x2="466.3" y2="455.7" stroke="#000" stroke-width="2.0" />
<line x1="466.3" y1="455.7" x2="443.6" y2="495.2" stroke="#000" stroke-width="2.0" />
<line x1="443.6" y1="495.2" x2="466.3" y2="534.7" stroke="#000" stroke-width="2.0" />
<line x1="182.8" y1="730.3" x2="198.1" y2="703.0" stroke="#000" stroke-width="2.0" />
<line x1="473.3" y1="526.4" x2="505.0" y2="526.4" stroke="#000" stroke-width="2.0" stroke-dasharray="6.2 6.2"/>
<line x1="508.2" y1="524.5" x2="524.1" y2="497.1" stroke="#000" stroke-width="2.0" stroke-dasharray="6.2 6.2"/>
<line x1="524.1" y1="493.3" x2="508.4" y2="465.9" stroke="#000" stroke-width="2.0" stroke-dasharray="6.2 6.2"/>
<line x1="505.1" y1="464.0" x2="473.3" y2="464.0" stroke="#000" stroke-width="2.0" stroke-dasharray="6.2 6.2"/>
<line x1="470.0" y1="465.9" x2="454.2" y2="493.3" stroke="#000" stroke-width="2.0" stroke-dasharray="6.2 6.2"/>
<line x1="454.2" y1="497.1" x2="470.0" y2="524.5" stroke="#000" stroke-width="2.0" stroke-dasharray="6.2 6.2"/>
<line x1="512.1" y1="455.7" x2="520.9" y2="440.9" stroke="#000" stroke-width="2.0" />
<line x1="520.9" y1="440.9" x2="529.7" y2="426.1" stroke="#f00" stroke-width="2.0" />
<line x1="534.7" y1="495.2" x2="553.2" y2="495.2" stroke="#000" stroke-width="2.0" />
<line x1="553.2" y1="495.2" x2="571.7" y2="495.2" stroke="#f00" stroke-width="2.0" />
<line x1="602.9" y1="534.8" x2="594.1" y2="520.0" stroke="#000" stroke-width="2.0" />
<line x1="594.1" y1="520.0" x2="585.4" y2="505.1" stroke="#f00" stroke-width="2.0" />
<line x1="443.8" y1="573.8" x2="429.0" y2="573.8" stroke="#000" stroke-width="2.0" />
<line x1="429.0" y1="573.8" x2="414.1" y2="573.8" stroke="#00f" stroke-width="2.0" />
<line x1="376.0" y1="613.5" x2="384.4" y2="598.5" stroke="#000" stroke-width="2.0" />
<line x1="384.4" y1="598.5" x2="392.8" y2="583.6" stroke="#00f" stroke-width="2.0" />
<line x1="376.0" y1="613.5" x2="387.2" y2="633.2" stroke="#000" stroke-width="2.0" />
<line x1="387.2" y1="633.2" x2="398.5" y2="652.9" stroke="#000" stroke-width="2.0" />
<line x1="398.5" y1="652.9" x2="414.4" y2="643.8" stroke="#000" stroke-width="2.0" />
<line x1="414.4" y1="643.8" x2="430.4" y2="634.6" stroke="#3cc" stroke-width="2.0" />
<line x1="398.5" y1="652.9" x2="382.2" y2="662.4" stroke="#000" stroke-width="2.0" />
<line x1="382.2" y1="662.4" x2="366.0" y2="671.9" stroke="#3cc" stroke-width="2.0" />
<line x1="398.5" y1="652.9" x2="407.3" y2="668.0" stroke="#000" stroke-width="2.0" />
<line x1="407.3" y1="668.0" x2="416.1" y2="683.0" stroke="#3cc" stroke-width="2.0" />
</g>
<text x="519.2" y="426" fill="#f00" font-size="15.6" font-family="Liberation Sans, sans-serif">OH</text>
<text x="572" y="504.2" fill="#f00" font-size="15.6" font-family="Liberation Sans, sans-serif">O</text>
<text x="383.6" y="582.6" fill="#00f" font-size="15.6" font-family="Liberation Sans, sans-serif">NH</text>
<text x="431.8" y="638.1" fill="#3cc" font-size="15.6" font-family="Liberation Sans, sans-serif">F</text>
<text x="353" y="683.4" fill="#3cc" font-size="15.6" font-family="Liberation Sans, sans-serif">F</text>
<text x="415.2" y="699.9" fill="#3cc" font-size="15.6" font-family="Liberation Sans, sans-serif">F</text></svg><!-- RIGHT WINDOW -->
<div class="win" id="rw" style="left:918px;top:589px;width:883px;height:519px;background:linear-gradient(#38485f,#3c4d65);border-top:1px solid #a3b4c8;border-left:1px solid #8094ad;border-right:1px solid #5a7396">
 <div class="title" style="background:#466080;height:30px"></div>
</div>
<div class="abs" style="left:923px;top:592.5px;width:24px;font:10.5px/12.4px 'Liberation Sans',sans-serif;color:#d6e0ec;letter-spacing:.5px;-webkit-text-stroke:.35px #d6e0ec">SMI<br>LES</div>
<span style="position:absolute;left:959.0px;top:599.00px;font:bold 13.0px/1 'Liberation Sans',sans-serif;color:#fff;white-space:pre;transform:scaleX(0.8770);transform-origin:0 0;">SMILES Manager</span>
<svg class="abs" style="left:1738px;top:596px" width="14" height="16" viewBox="0 0 14 16"><path d="M3.2 7V4.8a3.6 3.6 0 0 1 7.2 0V7" fill="none" stroke="#6b94c4" stroke-width="1.8"/><rect x="1" y="6.6" width="11.6" height="8.6" rx="1" fill="#6b94c4"/><rect x="6.1" y="9" width="1.5" height="3.6" fill="#466080"/></svg>
<svg class="abs" style="left:1760px;top:596px" width="12" height="16" viewBox="0 0 12 16"><path d="M2 4.6C2 2.6 3.8 1.6 6 1.6s4 1.1 4 3.1c0 2.6-3.6 2.9-3.6 5.6" fill="none" stroke="#6b94c4" stroke-width="2.7"/><circle cx="6.3" cy="13.4" r="1.900" fill="#6b94c4"/></svg>
<svg class="abs" style="left:1780px;top:596px" width="16" height="16" viewBox="0 0 16 16"><path d="M2.2 2.4L13.8 14M13.8 2.4L2.2 14" stroke="#6b94c4" stroke-width="3.6"/></svg>
<!-- tabs -->
<div class="abs" style="left:929.5px;top:634.8px;width:95px;height:23.6px;background:#5682b5;border:1px solid #24334a"></div>
<div class="abs" style="left:1025.5px;top:632.5px;width:109px;height:25.900px;background:#5682b5;border:1px solid #24334a"></div>
<span style="position:absolute;left:935.5px;top:640.00px;font:normal 13.0px/1 'Liberation Sans',sans-serif;color:#a9c4e2;white-space:pre;transform:scaleX(0.8547);transform-origin:0 0;">Manage SMILES</span>
<span style="position:absolute;left:1031.5px;top:638.80px;font:normal 13.0px/1 'Liberation Sans',sans-serif;color:#fff;white-space:pre;transform:scaleX(0.8935);transform-origin:0 0;">Replace fragments</span>
<div class="abs" style="left:929.5px;top:659.2px;width:860.6px;height:421.5px;border:1px solid #5f6f86"></div>
<!-- menu -->
<span style="position:absolute;left:949.3px;top:676.35px;font:normal 14.0px/1 'Liberation Sans',sans-serif;color:#fff;white-space:pre;transform:scaleX(0.8155);transform-origin:0 0;">File</span>
<span style="position:absolute;left:984.3px;top:676.35px;font:normal 14.0px/1 'Liberation Sans',sans-serif;color:#fff;white-space:pre;transform:scaleX(0.9036);transform-origin:0 0;">Edit</span>
<span style="position:absolute;left:1022.0px;top:676.35px;font:normal 14.0px/1 'Liberation Sans',sans-serif;color:#fff;white-space:pre;transform:scaleX(0.8972);transform-origin:0 0;">View</span>
<span style="position:absolute;left:1065.0px;top:676.35px;font:normal 14.0px/1 'Liberation Sans',sans-serif;color:#fff;white-space:pre;transform:scaleX(0.9877);transform-origin:0 0;">Import</span>
<span style="position:absolute;left:1120.2px;top:676.35px;font:normal 14.0px/1 'Liberation Sans',sans-serif;color:#fff;white-space:pre;transform:scaleX(0.8370);transform-origin:0 0;">Run</span>
<span style="position:absolute;left:1158.3px;top:676.35px;font:normal 14.0px/1 'Liberation Sans',sans-serif;color:#fff;white-space:pre;transform:scaleX(0.9341);transform-origin:0 0;">Export</span>
<!-- sections -->
<svg class="abs" style="left:0;top:0" width="1916" height="1116" viewBox="0 0 1916 1116">
 <g fill="#5b8cc8"><path d="M945 704.8l7.6 4.4-7.6 4.4z"/><path d="M945 733.8l7.6 4.4-7.6 4.4z"/><path d="M945 762.8l7.6 4.4-7.6 4.4z"/><path d="M945.2 791.4h10l-5 7.4z"/></g>
 <g stroke="#5c6e85" stroke-width="1" fill="none">
  <path d="M1059 710.5H1777"/><path d="M1073 739.5H1777"/><path d="M1104.5 768.5H1777"/>
  <path d="M1086.5 797.5H1777.5V1067.5H941.5V810"/>
 </g>
</svg>
<span style="position:absolute;left:966.8px;top:702.60px;font:normal 13.0px/1 'Liberation Sans',sans-serif;color:#fff;white-space:pre;transform:scaleX(0.9330);transform-origin:0 0;">Initial molecules</span>
<span style="position:absolute;left:966.8px;top:731.60px;font:normal 13.0px/1 'Liberation Sans',sans-serif;color:#fff;white-space:pre;transform:scaleX(0.9149);transform-origin:0 0;">Replaced fragment</span>
<span style="position:absolute;left:966.8px;top:760.60px;font:normal 13.0px/1 'Liberation Sans',sans-serif;color:#fff;white-space:pre;transform:scaleX(0.9191);transform-origin:0 0;">Replaced with fragments</span>
<span style="position:absolute;left:967.2px;top:789.80px;font:normal 13.0px/1 'Liberation Sans',sans-serif;color:#fff;white-space:pre;transform:scaleX(0.9022);transform-origin:0 0;">Replacing result table</span>
<!-- table -->
<div class="abs" style="left:953.5px;top:809.7px;width:812px;height:216.6px;background:#f3f6fb;border:1px solid #222e3f;border-bottom-color:#c9cfd8;border-right-color:#c9cfd8"></div>
<div class="abs" style="left:957px;top:813.5px;width:39.5px;height:28px;background:linear-gradient(#f3f6fb,#e4e7ec)"></div>
<div class="abs hd" style="left:997.5px;top:813.5px;width:180.5px;height:28px"></div>
<div class="abs hd" style="left:1178.5px;top:813.5px;width:483.5px;height:28px"></div>
<div class="abs hd" style="left:1662.5px;top:813.5px;width:81px;height:28px"></div>
<div class="abs" style="left:997px;top:841.5px;width:747px;height:1.5px;background:#555"></div>
<span style="position:absolute;left:1073.3px;top:822.10px;font:normal 13.0px/1 'Liberation Sans',sans-serif;color:#111;white-space:pre;transform:scaleX(0.9139);transform-origin:0 0;">Name</span>
<span style="position:absolute;left:1406.5px;top:822.10px;font:normal 13.0px/1 'Liberation Sans',sans-serif;color:#111;white-space:pre;transform:scaleX(0.9203);transform-origin:0 0;">Code</span>
<span style="position:absolute;left:1695.8px;top:822.10px;font:normal 13.0px/1 'Liberation Sans',sans-serif;color:#111;white-space:pre;transform:scaleX(0.8301);transform-origin:0 0;">2D</span>
<!-- row headers -->
<div class="abs rh" style="left:957px;top:844.5px;width:38.5px;height:81px"></div>
<div class="abs rh" style="left:957px;top:925.5px;width:38.5px;height:81px"></div>
<div class="abs rh" style="left:957px;top:1006.5px;width:38.5px;height:16px;border-bottom-color:#8a8a8a"></div>
<span style="position:absolute;left:964.7px;top:879.31px;font:bold 13.0px/1 'Liberation Serif',serif;color:#111;white-space:pre;">1</span>
<span style="position:absolute;left:964.7px;top:960.31px;font:bold 13.0px/1 'Liberation Serif',serif;color:#111;white-space:pre;">2</span>
<!-- grid -->
<div class="abs" style="left:1176.2px;top:843px;width:1.3px;height:180px;background:#000"></div>
<div class="abs" style="left:1660px;top:843px;width:1.3px;height:180px;background:#000"></div>
<div class="abs" style="left:1740px;top:843px;width:1.3px;height:180px;background:#000"></div>
<div class="abs" style="left:997px;top:922.8px;width:744px;height:1.3px;background:#000"></div>
<div class="abs" style="left:997px;top:1003.9px;width:744px;height:1.3px;background:#000"></div>
<span style="position:absolute;left:1000.5px;top:875.56px;font:normal 18.0px/1 'Liberation Sans',sans-serif;color:#000;white-space:pre;">COc1cc(ccc1O)CN...</span>
<span style="position:absolute;left:1180.5px;top:875.56px;font:normal 18.0px/1 'Liberation Sans',sans-serif;color:#000;white-space:pre;">COc1cc(ccc1O)CNS(=O)(=O)CCCCC=CC(C)C</span>
<span style="position:absolute;left:1000.5px;top:956.56px;font:normal 18.0px/1 'Liberation Sans',sans-serif;color:#000;white-space:pre;">COc1cc(ccc1O)CN...</span>
<span style="position:absolute;left:1180.5px;top:956.56px;font:normal 18.0px/1 'Liberation Sans',sans-serif;color:#000;white-space:pre;">COc1cc(ccc1O)CNC(CCCCC=CC(C)C)C(F)(F)F</span>
<!-- scrollbar -->
<div class="abs" style="left:1745px;top:813px;width:17px;height:210px;background:linear-gradient(90deg,#3a4657,#2d3949 40%,#333f50)"></div>
<div class="abs" style="left:1745px;top:813px;width:17px;height:17px;background:linear-gradient(#6796ce,#5383bb)"></div>
<div class="abs" style="left:1745px;top:1006px;width:17px;height:17px;background:linear-gradient(#6796ce,#5383bb)"></div>
<div class="abs" style="left:1749.3px;top:831px;width:8.2px;height:115.5px;border-radius:4px;background:linear-gradient(90deg,#f2f4f7,#cfd5df 60%,#b9c0cc)"></div>
<svg class="abs" style="left:1745px;top:813px" width="17" height="210" viewBox="0 0 17 210"><path d="M5.6 11l2.9-4.6 2.9 4.6z" fill="#f4f7fb"/><path d="M5.6 199l2.9 4.6 2.9-4.6z" fill="#f4f7fb"/></svg>
<!-- mini molecules + bottom icons -->
<svg class="abs" style="left:0;top:0" width="1916" height="1116" viewBox="0 0 1916 1116" fill="none" stroke-linecap="round" stroke-linejoin="round">
 <g stroke-width="1.8">
  <!-- thumb 1 -->
  <path d="M1692.2 876.8L1689 881.4 1692.4 886.1 1688.8 890.1 1692.4 894.8 1688.8 898.9 1692.4 903.6 1689.3 908.3 1683.2 908.3M1689.3 908.3L1692.4 913" stroke="#0a0a0a"/>
  <path d="M1685.7 872.7L1697.1 879.4M1688.4 880.6L1694.6 871.6" stroke="#ff2a2a" stroke-width="2.4"/>
  <path d="M1690 878l3-4" stroke="#d6d020" stroke-width="2.6"/>
  <path d="M1693.6 872.2L1699.4 870.6" stroke="#1a1aff" stroke-width="2"/>
  <path d="M1699.4 870.6L1702.6 866.4" stroke="#111"/>
  <path d="M1700.2 871.6l1.6-2.2" stroke="#ff8080" stroke-width="1.4"/>
  <path d="M1709.9 861.9L1707.5 866.0L1702.9 866.0L1700.5 861.9L1702.9 857.8L1707.5 857.8z" stroke="#000" stroke-width="2.6"/>
  <path d="M1708.6 857.2L1710.4 852.8" stroke="#f00"/>
  <path d="M1710 862L1715.2 862.6" stroke="#f00"/><path d="M1715.6 863L1719.2 867.2" stroke="#111"/>
  <!-- thumb 2 -->
  <path d="M1703 966.4L1697 966.6 1694.4 970.9 1689.1 970.9 1686.5 975.9 1681.2 975.9 1678.6 980.6 1673.3 980.6 1670.3 975.9M1673.3 980.6L1670.3 985.9M1681.6 977.6l-2.2 3.8" stroke="#0a0a0a"/>
  <path d="M1703 966.4L1706.2 971.6" stroke="#111"/>
  <path d="M1706.2 971.8L1711.2 968.4M1706.2 971.8L1701.6 974M1706.2 971.8L1709.2 976" stroke="#ff8a8a" stroke-width="3.2"/>
  <path d="M1706.2 971.8L1711.2 968.4M1706.2 971.8L1701.6 974M1706.2 971.8L1709.2 976" stroke="#3ab5b5" stroke-width="1.6"/>
  <path d="M1697 966.2l3-1M1705.5 961.6l1.5-2.6" stroke="#ff8a8a" stroke-width="1.6"/>
  <path d="M1703.4 966L1705.6 962" stroke="#1a1aff" stroke-width="2"/><path d="M1705.6 961.8L1710.6 961.6" stroke="#1a1aff" stroke-width="2"/>
  <path d="M1711.2 961.6L1714.4 957" stroke="#111"/>
  <path d="M1721.9 952.2L1719.5 956.3L1714.9 956.3L1712.5 952.2L1714.9 948.1L1719.5 948.1z" stroke="#000" stroke-width="2.6"/>
  <path d="M1720.8 947.2L1723.2 942.8" stroke="#f00"/>
  <path d="M1722 952L1727.8 952" stroke="#f00"/><path d="M1728.4 952.6L1731.6 957" stroke="#111"/>
 </g>
 <!-- bottom-left icons -->
 <g>
  <path d="M959.6 1038.6L972.6 1051.4M972.6 1038.6L959.6 1051.4" stroke="#1f2a3a" stroke-width="6.4"/>
  <path d="M959.6 1038.6L972.6 1051.4M972.6 1038.6L959.6 1051.4" stroke="#9fbfe6" stroke-width="4.2"/>
  <path d="M985.4 1044.6H998.4" stroke="#1f2a3a" stroke-width="7"/>
  <path d="M985.4 1044.6H998.4" stroke="#93bde8" stroke-width="4.8"/>
 </g>
 <g stroke="none">
  <path d="M1012.4 1041.2h10.6l-1.2 12.6h-8.2z" fill="#a9cdf0"/>
  <path d="M1011 1038.2h13.4v2h-13.4z" fill="#8db7e2"/><rect x="1016" y="1036.2" width="3.4" height="2.2" rx="1" fill="#8db7e2"/>
  <!-- grid icon -->
  <rect x="1717.4" y="1036.8" width="19.4" height="16.4" rx="1" fill="#a9c9ee"/>
  <g fill="#34465d"><rect x="1719.2" y="1039.6" width="4.2" height="2.6"/><rect x="1725" y="1039.6" width="4.2" height="2.6"/><rect x="1730.8" y="1039.6" width="4.2" height="2.6"/>
  <rect x="1719.2" y="1044" width="4.2" height="2.6"/><rect x="1725" y="1044" width="4.2" height="2.6"/><rect x="1730.8" y="1044" width="4.2" height="2.6"/>
  <rect x="1719.2" y="1048.4" width="4.2" height="2.6"/><rect x="1725" y="1048.4" width="4.2" height="2.6"/><rect x="1730.8" y="1048.4" width="4.2" height="2.6"/></g>
  <!-- save icon -->
  <path d="M1744.6 1036.4h13.6l3.4 3v14h-17z" fill="#9cc0ea"/>
  <rect x="1747.4" y="1037.4" width="10.6" height="5.4" fill="#50607a"/><rect x="1754.2" y="1038.2" width="2" height="3.6" fill="#cfd9e6"/>
  <rect x="1747.2" y="1045.6" width="11.8" height="7.2" fill="#e4e3dd"/>
  <!-- resize grip -->
  <path d="M1786.6 1107L1799.6 1095.6V1107z" fill="#5b8cc8"/>
 </g>
</svg>
</body></html>
